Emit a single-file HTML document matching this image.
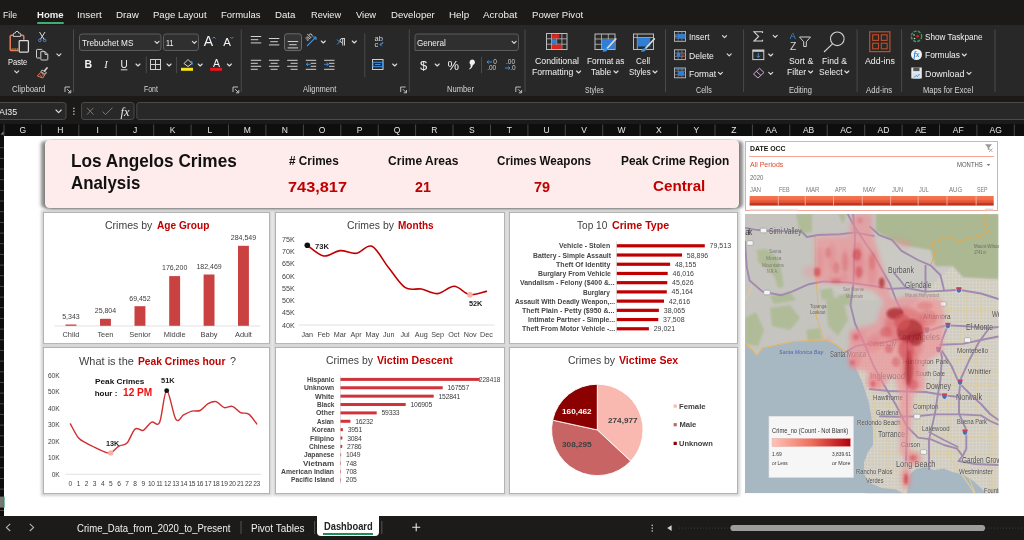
<!DOCTYPE html>
<html><head><meta charset="utf-8"><title>Los Angelos Crimes Analysis - Dashboard</title>
<style>
html,body{margin:0;padding:0;}
body{width:1024px;height:540px;overflow:hidden;position:relative;background:#fff;font-family:'Liberation Sans',sans-serif;}
.t{position:absolute;white-space:pre;line-height:1;}
#root{position:absolute;left:0;top:0;width:1024px;height:540px;overflow:hidden;will-change:transform;}
svg{overflow:visible}
</style></head><body><div id="root">
<div style="position:absolute;left:0;top:0;width:1024px;height:25px;background:#1b1a19"></div>
<div style="position:absolute;left:0;top:25px;width:1024px;height:71px;background:#282828"></div>
<div style="position:absolute;left:0;top:96px;width:1024px;height:28px;background:#1b1a19"></div>
<div style="position:absolute;left:0;top:124px;width:1024px;height:12px;background:#0e0e0e"></div>
<span class="t" style="left:2.90px;top:10px;font-size:9.9px;color:#f0f0f0;transform:scaleX(0.884);transform-origin:0 0;">File</span>
<span class="t" style="left:36.60px;top:10px;font-size:9.9px;color:#f0f0f0;font-weight:700;transform:scaleX(0.967);transform-origin:0 0;">Home</span>
<span class="t" style="left:77.00px;top:10px;font-size:9.9px;color:#f0f0f0;">Insert</span>
<span class="t" style="left:116.00px;top:10px;font-size:9.9px;color:#f0f0f0;transform:scaleX(0.990);transform-origin:0 0;">Draw</span>
<span class="t" style="left:152.90px;top:10px;font-size:9.9px;color:#f0f0f0;transform:scaleX(0.966);transform-origin:0 0;">Page Layout</span>
<span class="t" style="left:221.20px;top:10px;font-size:9.9px;color:#f0f0f0;transform:scaleX(0.960);transform-origin:0 0;">Formulas</span>
<span class="t" style="left:274.50px;top:10px;font-size:9.9px;color:#f0f0f0;transform:scaleX(0.980);transform-origin:0 0;">Data</span>
<span class="t" style="left:310.50px;top:10px;font-size:9.9px;color:#f0f0f0;transform:scaleX(0.929);transform-origin:0 0;">Review</span>
<span class="t" style="left:355.60px;top:10px;font-size:9.9px;color:#f0f0f0;transform:scaleX(0.948);transform-origin:0 0;">View</span>
<span class="t" style="left:390.50px;top:10px;font-size:9.9px;color:#f0f0f0;transform:scaleX(0.973);transform-origin:0 0;">Developer</span>
<span class="t" style="left:449.10px;top:10px;font-size:9.9px;color:#f0f0f0;transform:scaleX(0.992);transform-origin:0 0;">Help</span>
<span class="t" style="left:482.80px;top:10px;font-size:9.9px;color:#f0f0f0;transform:scaleX(1.005);transform-origin:0 0;">Acrobat</span>
<span class="t" style="left:531.70px;top:10px;font-size:9.9px;color:#f0f0f0;transform:scaleX(0.971);transform-origin:0 0;">Power Pivot</span>
<div style="position:absolute;left:36.5px;top:22.2px;width:27.8px;height:1.5px;background:#3fae72;border-radius:1px"></div>
<svg style="position:absolute;left:0;top:0" width="1024" height="136" viewBox="0 0 1024 136"><rect x="73.0" y="29.5" width="1" height="62.5" fill="#4a4a4a"/><rect x="240.7" y="29.5" width="1" height="62.5" fill="#4a4a4a"/><rect x="408.8" y="29.5" width="1" height="62.5" fill="#4a4a4a"/><rect x="524.5" y="29.5" width="1" height="62.5" fill="#4a4a4a"/><rect x="665.0" y="29.5" width="1" height="62.5" fill="#4a4a4a"/><rect x="743.1" y="29.5" width="1" height="62.5" fill="#4a4a4a"/><rect x="856.6" y="29.5" width="1" height="62.5" fill="#4a4a4a"/><rect x="901.1" y="29.5" width="1" height="62.5" fill="#4a4a4a"/><rect x="994.5" y="29.5" width="1" height="62.5" fill="#4a4a4a"/><rect x="145.8" y="56.5" width="1" height="16.700000000000003" fill="#4a4a4a"/><rect x="176.1" y="56.9" width="1" height="16.300000000000004" fill="#4a4a4a"/><rect x="364.3" y="33.3" width="1" height="44.0" fill="#4a4a4a"/><rect x="481.0" y="56.9" width="1" height="16.300000000000004" fill="#4a4a4a"/><path d="M13.4 35.2 H11.4 a1.2 1.2 0 0 0 -1.2 1.2 V49.4 a1.2 1.2 0 0 0 1.2 1.2 H18.4 M20.6 35.2 H22.6 a1.2 1.2 0 0 1 1.2 1.2 V39.8" fill="none" stroke="#ea7d57" stroke-width="1.5"/><path d="M13.3 36.4 V34.2 q0 -1 1 -1 h0.9 q0.3 -1.9 1.8 -1.9 q1.5 0 1.8 1.9 h0.9 q1 0 1 1 V36.4 Z" fill="#282828" stroke="#cfcfcf" stroke-width="1"/><path d="M11.6 49 H18.2" stroke="#f0c419" stroke-width="1.1" stroke-dasharray="1.1 0.7"/><rect x="19.2" y="40.6" width="9.2" height="11.4" rx="0.8" fill="#282828" stroke="#dadada" stroke-width="1.25"/><path d="M14.7 70.9 L16.7 72.9 L18.7 70.9" fill="none" stroke="#dcdcdc" stroke-width="1.15" stroke-linecap="round" stroke-linejoin="round"/><path d="M39.5 32 L44.2 39.5 M45 32 L40.3 39.5" stroke="#d8d8d8" stroke-width="1" fill="none"/><circle cx="39.8" cy="40.3" r="1.3" fill="none" stroke="#3d8fe0" stroke-width="1"/><circle cx="44.7" cy="40.3" r="1.3" fill="none" stroke="#3d8fe0" stroke-width="1"/><path d="M40 58 H37.3 a0.8 0.8 0 0 1 -0.8 -0.8 V50.2 a0.8 0.8 0 0 1 0.8 -0.8 H41.8 L43 50.6" fill="none" stroke="#d0d0d0" stroke-width="1"/><path d="M40.8 51.6 H45 L47.8 54.4 V59.4 a0.6 0.6 0 0 1 -0.6 0.6 H41.4 a0.6 0.6 0 0 1 -0.6 -0.6 Z M45 51.6 V54.4 H47.8" fill="#282828" stroke="#d0d0d0" stroke-width="1" stroke-linejoin="round"/><path d="M56.9 53.8 L58.9 55.8 L60.9 53.8" fill="none" stroke="#dcdcdc" stroke-width="1.15" stroke-linecap="round" stroke-linejoin="round"/><path d="M47 68 L44.6 70.8" stroke="#d0d0d0" stroke-width="1.7" stroke-linecap="round"/><path d="M42 70 L46.4 72.5 L45.3 74.3 L40.9 71.8 Z" fill="#282828" stroke="#d0d0d0" stroke-width="0.9"/><path d="M40.6 72.4 L44.8 74.8 L42.8 78 L37.4 76 Z" fill="none" stroke="#ea7d57" stroke-width="1"/><path d="M40.2 74.6 L41.8 77.4 M42.3 74.4 L43.4 76.4" stroke="#ea7d57" stroke-width="0.7"/><path d="M65 92 V87 H70" fill="none" stroke="#bdbdbd" stroke-width="1"/><path d="M67.2 89.2 L70.6 92.6 M70.8 90 V92.8 H68" fill="none" stroke="#bdbdbd" stroke-width="1"/><rect x="79.5" y="34" width="81.5" height="16.5" rx="2.5" fill="#2f2f2f" stroke="#5c5c5c" stroke-width="1"/><path d="M155.0 41.3 L157.0 43.3 L159.0 41.3" fill="none" stroke="#dcdcdc" stroke-width="1.15" stroke-linecap="round" stroke-linejoin="round"/><rect x="163.5" y="34" width="35" height="16.5" rx="2.5" fill="#2f2f2f" stroke="#5c5c5c" stroke-width="1"/><path d="M192.4 41.3 L194.4 43.3 L196.4 41.3" fill="none" stroke="#dcdcdc" stroke-width="1.15" stroke-linecap="round" stroke-linejoin="round"/><path d="M136.0 64.0 L138.0 66.0 L140.0 64.0" fill="none" stroke="#dcdcdc" stroke-width="1.15" stroke-linecap="round" stroke-linejoin="round"/><rect x="120.8" y="69.3" width="6.6" height="1" fill="#d8d8d8"/><rect x="150.5" y="59.5" width="10" height="10" fill="none" stroke="#cfcfcf" stroke-width="1"/><path d="M155.5 59.5 V69.5 M150.5 64.5 H160.5" stroke="#cfcfcf" stroke-width="1"/><path d="M167.1 64.0 L169.1 66.0 L171.1 64.0" fill="none" stroke="#dcdcdc" stroke-width="1.15" stroke-linecap="round" stroke-linejoin="round"/><path d="M184 63.5 L188 59.5 L192 63.5 L188 66.5 Z" fill="none" stroke="#d8d8d8" stroke-width="1"/><path d="M191.5 61 L192.5 64.5" stroke="#3d8fe0" stroke-width="1.2"/><rect x="181" y="67.8" width="12" height="3" fill="#f5e41a"/><path d="M198.2 64.0 L200.2 66.0 L202.2 64.0" fill="none" stroke="#dcdcdc" stroke-width="1.15" stroke-linecap="round" stroke-linejoin="round"/><rect x="210.1" y="67.8" width="12" height="3" fill="#e8161d"/><path d="M227.4 64.0 L229.4 66.0 L231.4 64.0" fill="none" stroke="#dcdcdc" stroke-width="1.15" stroke-linecap="round" stroke-linejoin="round"/><path d="M212.5 38.5 L214 37 L215.5 38.5" fill="none" stroke="#3d8fe0" stroke-width="1"/><path d="M230.3 37 L231.8 38.5 L233.3 37" fill="none" stroke="#3d8fe0" stroke-width="1"/><path d="M233 92 V87 H238" fill="none" stroke="#bdbdbd" stroke-width="1"/><path d="M235.2 89.2 L238.6 92.6 M238.8 90 V92.8 H236" fill="none" stroke="#bdbdbd" stroke-width="1"/><rect x="250.8" y="36.0" width="10.4" height="1" fill="#d0d0d0"/><rect x="250.8" y="39.2" width="7.5" height="1" fill="#d0d0d0"/><rect x="250.8" y="42.4" width="10.4" height="1" fill="#d0d0d0"/><rect x="268.9" y="38.0" width="10.4" height="1" fill="#d0d0d0"/><rect x="270.3" y="41.2" width="7.5" height="1" fill="#d0d0d0"/><rect x="268.9" y="44.4" width="10.4" height="1" fill="#d0d0d0"/><rect x="284.5" y="33.8" width="17" height="16.8" rx="2.5" fill="#343434" stroke="#6a6a6a" stroke-width="1"/><rect x="287.7" y="41.0" width="10.4" height="1" fill="#d0d0d0"/><rect x="289.1" y="44.2" width="7.5" height="1" fill="#d0d0d0"/><rect x="287.7" y="47.4" width="10.4" height="1" fill="#d0d0d0"/><path d="M307 46 L316 37 M316 37 h-3 M316 37 v3" stroke="#3d8fe0" stroke-width="1.1" fill="none"/><path d="M321.3 41.0 L323.3 43.0 L325.3 41.0" fill="none" stroke="#dcdcdc" stroke-width="1.15" stroke-linecap="round" stroke-linejoin="round"/><path d="M337 39.5 L339.5 42 L337 44.5" stroke="#3d8fe0" stroke-width="1" fill="none"/><path d="M344.5 38.5 V45.5 M342.7 38.5 V45.5 M345 38.5 H342 a2 2 0 0 0 0 4" stroke="#d0d0d0" stroke-width="1" fill="none"/><path d="M352.3 41.0 L354.3 43.0 L356.3 41.0" fill="none" stroke="#dcdcdc" stroke-width="1.15" stroke-linecap="round" stroke-linejoin="round"/><rect x="250.8" y="59.8" width="10.4" height="1" fill="#d0d0d0"/><rect x="250.8" y="62.8" width="7.0" height="1" fill="#d0d0d0"/><rect x="250.8" y="65.8" width="10.4" height="1" fill="#d0d0d0"/><rect x="250.8" y="68.8" width="7.0" height="1" fill="#d0d0d0"/><rect x="268.9" y="59.8" width="10.4" height="1" fill="#d0d0d0"/><rect x="270.6" y="62.8" width="7.0" height="1" fill="#d0d0d0"/><rect x="268.9" y="65.8" width="10.4" height="1" fill="#d0d0d0"/><rect x="270.6" y="68.8" width="7.0" height="1" fill="#d0d0d0"/><rect x="287.2" y="59.8" width="10.4" height="1" fill="#d0d0d0"/><rect x="290.6" y="62.8" width="7.0" height="1" fill="#d0d0d0"/><rect x="287.2" y="65.8" width="10.4" height="1" fill="#d0d0d0"/><rect x="290.6" y="68.8" width="7.0" height="1" fill="#d0d0d0"/><rect x="305.8" y="59.8" width="10.4" height="1" fill="#d0d0d0"/><rect x="310.7" y="62.8" width="5.5" height="1" fill="#d0d0d0"/><rect x="310.7" y="65.8" width="5.5" height="1" fill="#d0d0d0"/><rect x="305.8" y="68.8" width="10.4" height="1" fill="#d0d0d0"/><path d="M310.5 64.3 H306.2 m1.8 -1.8 l-1.8 1.8 l1.8 1.8" stroke="#3d8fe0" stroke-width="1" fill="none"/><rect x="324.1" y="59.8" width="10.4" height="1" fill="#d0d0d0"/><rect x="329.0" y="62.8" width="5.5" height="1" fill="#d0d0d0"/><rect x="329.0" y="65.8" width="5.5" height="1" fill="#d0d0d0"/><rect x="324.1" y="68.8" width="10.4" height="1" fill="#d0d0d0"/><path d="M324.2 64.3 H328.5 m-1.8 -1.8 l1.8 1.8 l-1.8 1.8" stroke="#3d8fe0" stroke-width="1" fill="none"/><path d="M380 44.5 q3 0 3 -2.5 M380 44.5 l1.8 -1.8 M380 44.5 l1.8 1.8" stroke="#3d8fe0" stroke-width="1" fill="none"/><rect x="372.5" y="59.5" width="10.5" height="10" fill="none" stroke="#cfcfcf" stroke-width="1"/><rect x="373" y="62.3" width="9.5" height="4.4" fill="none" stroke="#3d8fe0" stroke-width="1"/><path d="M375 64.5 H380.5" stroke="#3d8fe0" stroke-width="1"/><path d="M392.7 64.0 L394.7 66.0 L396.7 64.0" fill="none" stroke="#dcdcdc" stroke-width="1.15" stroke-linecap="round" stroke-linejoin="round"/><path d="M400.7 92 V87 H405.7" fill="none" stroke="#bdbdbd" stroke-width="1"/><path d="M402.9 89.2 L406.3 92.6 M406.5 90 V92.8 H403.7" fill="none" stroke="#bdbdbd" stroke-width="1"/><path d="M415 50.5 V36.5 a2.5 2.5 0 0 1 2.5 -2.5 H516 a2.5 2.5 0 0 1 2.5 2.5 V48 a2.5 2.5 0 0 1 -2.5 2.5 Z" fill="#2f2f2f" stroke="#5c5c5c" stroke-width="1"/><path d="M512.1 41.3 L514.1 43.3 L516.1 41.3" fill="none" stroke="#dcdcdc" stroke-width="1.15" stroke-linecap="round" stroke-linejoin="round"/><path d="M435.2 64.0 L437.2 66.0 L439.2 64.0" fill="none" stroke="#dcdcdc" stroke-width="1.15" stroke-linecap="round" stroke-linejoin="round"/><path d="M492 62 H487 m1.6 -1.6 l-1.6 1.6 l1.6 1.6" stroke="#3d8fe0" stroke-width="1" fill="none"/><path d="M505 68 H510 m-1.6 -1.6 l1.6 1.6 l-1.6 1.6" stroke="#3d8fe0" stroke-width="1" fill="none"/><path d="M472.2 59.6 a2.7 2.7 0 1 1 -1.2 5.1 q1.8 -0.2 1.6 -1.6 q1.2 3.8 -2.9 6.3 l-0.5 -0.7 q2.3 -2 1.3 -4.3 a2.7 2.7 0 0 1 1.7 -4.8 Z" fill="#f0f0f0"/><path d="M515.8 92 V87 H520.8" fill="none" stroke="#bdbdbd" stroke-width="1"/><path d="M518.0 89.2 L521.4 92.6 M521.5999999999999 90 V92.8 H518.8" fill="none" stroke="#bdbdbd" stroke-width="1"/><rect x="546.5" y="33.5" width="20.5" height="16" fill="#2b2b2b" stroke="#bdbdbd" stroke-width="1"/><path d="M546.5 38.8 H567 M546.5 44.2 H567 M551.5 33.5 V49.5 M556.7 33.5 V49.5 M561.9 33.5 V49.5" stroke="#bdbdbd" stroke-width="0.8"/><rect x="551.9" y="34.3" width="7.5" height="4" fill="#e2231a"/><rect x="551.9" y="39.3" width="4.5" height="4.4" fill="#2f7fd6"/><rect x="551.9" y="44.7" width="9.5" height="4.2" fill="#e2231a"/><path d="M576.6 71.0 L578.6 73.0 L580.6 71.0" fill="none" stroke="#dcdcdc" stroke-width="1.15" stroke-linecap="round" stroke-linejoin="round"/><rect x="595" y="34" width="20" height="15.5" fill="#2b2b2b" stroke="#bdbdbd" stroke-width="1"/><path d="M595 39 H615 M595 44.3 H615 M601.5 34 V49.5 M608.3 34 V49.5" stroke="#bdbdbd" stroke-width="0.8"/><rect x="601.9" y="39.4" width="12.7" height="9.7" fill="#2f7fd6"/><path d="M615.8 39 L607 48.5" stroke="#d8d8d8" stroke-width="1.8" stroke-linecap="round"/><path d="M606.8 48 q-2.8 0.2 -4.3 3.6 q4 0.6 5.6 -2.4 Z" fill="#3d8fe0"/><path d="M614.0 71.0 L616.0 73.0 L618.0 71.0" fill="none" stroke="#dcdcdc" stroke-width="1.15" stroke-linecap="round" stroke-linejoin="round"/><rect x="633.5" y="34" width="20" height="15.5" fill="#2b2b2b" stroke="#bdbdbd" stroke-width="1"/><path d="M633.5 37.5 H653.5 M637.3 34 V49.5" stroke="#bdbdbd" stroke-width="0.8"/><rect x="637.8" y="38" width="12.5" height="8.5" fill="#2f7fd6"/><path d="M654.3 39 L645.5 48.5" stroke="#d8d8d8" stroke-width="1.8" stroke-linecap="round"/><path d="M645.3 48 q-2.8 0.2 -4.3 3.6 q4 0.6 5.6 -2.4 Z" fill="#3d8fe0"/><path d="M653.0 71.0 L655.0 73.0 L657.0 71.0" fill="none" stroke="#dcdcdc" stroke-width="1.15" stroke-linecap="round" stroke-linejoin="round"/><rect x="674.5" y="31.5" width="11" height="9.8" fill="none" stroke="#bdbdbd" stroke-width="0.9"/><path d="M674.5 34.7 H685.5 M674.5 38.1 H685.5 M678.2 31.5 V41.3 M681.9 31.5 V41.3" stroke="#9a9a9a" stroke-width="0.6"/><rect x="674.5" y="49.8" width="11" height="9.8" fill="none" stroke="#bdbdbd" stroke-width="0.9"/><path d="M674.5 53.0 H685.5 M674.5 56.4 H685.5 M678.2 49.8 V59.599999999999994 M681.9 49.8 V59.599999999999994" stroke="#9a9a9a" stroke-width="0.6"/><rect x="674.5" y="68" width="11" height="9.8" fill="none" stroke="#bdbdbd" stroke-width="0.9"/><path d="M674.5 71.2 H685.5 M674.5 74.6 H685.5 M678.2 68 V77.8 M681.9 68 V77.8" stroke="#9a9a9a" stroke-width="0.6"/><rect x="678" y="33.9" width="7.5" height="4.6" fill="#2f7fd6"/><path d="M679.5 36.2 H675 m1.6 -1.4 l-1.6 1.4 l1.6 1.4" stroke="#3d8fe0" stroke-width="1" fill="none"/><circle cx="678.5" cy="54.7" r="2.1" fill="#2f7fd6"/><path d="M681.5 52.7 l3.6 4 M685.1 52.7 l-3.6 4" stroke="#e2231a" stroke-width="1"/><rect x="678.2" y="71.2" width="6" height="4.6" fill="#2f7fd6"/><path d="M675.5 69 H684.5" stroke="#3d8fe0" stroke-width="1"/><path d="M722.5 35.6 L724.5 37.6 L726.5 35.6" fill="none" stroke="#dcdcdc" stroke-width="1.15" stroke-linecap="round" stroke-linejoin="round"/><path d="M727.2 53.9 L729.2 55.9 L731.2 53.9" fill="none" stroke="#dcdcdc" stroke-width="1.15" stroke-linecap="round" stroke-linejoin="round"/><path d="M718.4 72.3 L720.4 74.3 L722.4 72.3" fill="none" stroke="#dcdcdc" stroke-width="1.15" stroke-linecap="round" stroke-linejoin="round"/><path d="M762.5 33 V31.8 H754 L758.6 36.4 L754 41 H762.5 V39.8" fill="none" stroke="#d8d8d8" stroke-width="1.1"/><path d="M773.2 35.4 L775.2 37.4 L777.2 35.4" fill="none" stroke="#dcdcdc" stroke-width="1.15" stroke-linecap="round" stroke-linejoin="round"/><rect x="752.8" y="50" width="11" height="9.6" fill="none" stroke="#cfcfcf" stroke-width="1"/><rect x="752.8" y="50" width="11" height="1.8" fill="#cfcfcf"/><path d="M758.3 53 V57.5 m-1.8 -1.8 l1.8 1.8 l1.8 -1.8" stroke="#3d8fe0" stroke-width="1" fill="none"/><path d="M768.7 54.0 L770.7 56.0 L772.7 54.0" fill="none" stroke="#dcdcdc" stroke-width="1.15" stroke-linecap="round" stroke-linejoin="round"/><path d="M753.5 74 L759.5 68.3 L764 72.5 L758 78 Z" fill="none" stroke="#d7a3d7" stroke-width="1"/><path d="M756.3 71.3 L761 75.5" stroke="#d7a3d7" stroke-width="1"/><path d="M768.7 72.3 L770.7 74.3 L772.7 72.3" fill="none" stroke="#dcdcdc" stroke-width="1.15" stroke-linecap="round" stroke-linejoin="round"/><path d="M799.5 37 H810.5 L806.3 41.8 V46.5 H803.7 V41.8 Z" fill="none" stroke="#d0d0d0" stroke-width="1"/><path d="M808.6 71.0 L810.6 73.0 L812.6 71.0" fill="none" stroke="#dcdcdc" stroke-width="1.15" stroke-linecap="round" stroke-linejoin="round"/><circle cx="837.3" cy="38.8" r="6.8" fill="none" stroke="#d0d0d0" stroke-width="1.1"/><path d="M832.5 43.8 L824 52" stroke="#d0d0d0" stroke-width="1.1"/><path d="M844.8 71.0 L846.8 73.0 L848.8 71.0" fill="none" stroke="#dcdcdc" stroke-width="1.15" stroke-linecap="round" stroke-linejoin="round"/><rect x="869.7" y="31.8" width="20.2" height="19.8" fill="none" stroke="#bd4f2b" stroke-width="1.2"/><rect x="872.7" y="34.8" width="5.8" height="5.6" fill="none" stroke="#bd4f2b" stroke-width="1.1"/><rect x="881.3" y="34.8" width="5.8" height="5.6" fill="none" stroke="#bd4f2b" stroke-width="1.1"/><rect x="872.7" y="43.2" width="5.8" height="5.6" fill="none" stroke="#bd4f2b" stroke-width="1.1"/><rect x="881.3" y="43.2" width="5.8" height="5.6" fill="none" stroke="#bd4f2b" stroke-width="1.1"/><circle cx="916.5" cy="36.3" r="5.2" fill="#2a2a2a" stroke="#3c9a63" stroke-width="1.4" stroke-dasharray="3 1.2"/><circle cx="917.6" cy="36.3" r="1.2" fill="#e2231a"/><circle cx="914" cy="35" r="0.8" fill="#d0d0d0"/><circle cx="914.5" cy="38.5" r="0.8" fill="#d0d0d0"/><circle cx="916.5" cy="54.5" r="5.5" fill="#f2f2f2"/><rect x="911.3" y="67.5" width="10.5" height="11" fill="#e8e8e8"/><rect x="913.3" y="67.5" width="6.2" height="3.6" fill="#555"/><rect x="913" y="73.2" width="7" height="5.3" fill="#cfe3f2"/><path d="M914 77.5 l2 -2 l1.5 1 l2 -2.5" stroke="#3d8fe0" stroke-width="0.9" fill="none"/><path d="M962.3 54.0 L964.3 56.0 L966.3 54.0" fill="none" stroke="#dcdcdc" stroke-width="1.15" stroke-linecap="round" stroke-linejoin="round"/><path d="M967.0 72.4 L969.0 74.4 L971.0 72.4" fill="none" stroke="#dcdcdc" stroke-width="1.15" stroke-linecap="round" stroke-linejoin="round"/></svg>
<span class="t" style="left:7.80px;top:57px;font-size:9.6px;color:#f2f2f2;transform:scaleX(0.782);transform-origin:0 0;">Paste</span>
<span class="t" style="left:12.00px;top:85px;font-size:9.0px;color:#d6d6d6;transform:scaleX(0.867);transform-origin:0 0;">Clipboard</span>
<span class="t" style="left:81.80px;top:38px;font-size:9.6px;color:#f2f2f2;transform:scaleX(0.859);transform-origin:0 0;">Trebuchet MS</span>
<span class="t" style="left:165.60px;top:38px;font-size:9.6px;color:#f2f2f2;transform:scaleX(0.743);transform-origin:0 0;">11</span>
<span class="t" style="left:84.61px;top:59px;font-size:10.5px;color:#f2f2f2;font-weight:700;">B</span>
<span class="t" style="left:104.25px;top:60px;font-size:10.5px;color:#f2f2f2;font-style:italic;font-family:'Liberation Serif',serif;">I</span>
<span class="t" style="left:120.49px;top:60px;font-size:10.0px;color:#f2f2f2;">U</span>
<span class="t" style="left:203.63px;top:34px;font-size:14.0px;color:#f2f2f2;">A</span>
<span class="t" style="left:223.16px;top:37px;font-size:11.5px;color:#f2f2f2;">A</span>
<span class="t" style="left:212.90px;top:58px;font-size:10.5px;color:#f2f2f2;">A</span>
<span class="t" style="left:144.00px;top:85px;font-size:9.0px;color:#d6d6d6;transform:scaleX(0.766);transform-origin:0 0;">Font</span>
<span class="t" style="left:306.00px;top:36px;font-size:7.5px;color:#d0d0d0;transform:rotate(-45deg);transform-origin:left center;">ab</span>
<span class="t" style="left:374.60px;top:35px;font-size:7.5px;color:#d8d8d8;">ab</span>
<span class="t" style="left:374.60px;top:41px;font-size:7.5px;color:#d8d8d8;">c</span>
<span class="t" style="left:302.50px;top:85px;font-size:9.0px;color:#d6d6d6;transform:scaleX(0.830);transform-origin:0 0;">Alignment</span>
<span class="t" style="left:417.30px;top:38px;font-size:9.6px;color:#f2f2f2;transform:scaleX(0.846);transform-origin:0 0;">General</span>
<span class="t" style="left:419.88px;top:59px;font-size:13.0px;color:#f2f2f2;">$</span>
<span class="t" style="left:447.42px;top:59px;font-size:13.0px;color:#f2f2f2;">%</span>
<span class="t" style="left:493.20px;top:59px;font-size:6.5px;color:#d0d0d0;">0</span>
<span class="t" style="left:487.20px;top:65px;font-size:6.5px;color:#d0d0d0;">.00</span>
<span class="t" style="left:506.00px;top:59px;font-size:6.5px;color:#d0d0d0;">.00</span>
<span class="t" style="left:510.30px;top:65px;font-size:6.5px;color:#d0d0d0;">.0</span>
<span class="t" style="left:447.00px;top:85px;font-size:9.0px;color:#d6d6d6;transform:scaleX(0.843);transform-origin:0 0;">Number</span>
<span class="t" style="left:534.70px;top:56px;font-size:9.6px;color:#f2f2f2;transform:scaleX(0.916);transform-origin:0 0;">Conditional</span>
<span class="t" style="left:531.90px;top:67px;font-size:9.6px;color:#f2f2f2;transform:scaleX(0.902);transform-origin:0 0;">Formatting</span>
<span class="t" style="left:586.60px;top:56px;font-size:9.6px;color:#f2f2f2;transform:scaleX(0.866);transform-origin:0 0;">Format as</span>
<span class="t" style="left:591.30px;top:67px;font-size:9.6px;color:#f2f2f2;transform:scaleX(0.884);transform-origin:0 0;">Table</span>
<span class="t" style="left:636.00px;top:56px;font-size:9.6px;color:#f2f2f2;transform:scaleX(0.852);transform-origin:0 0;">Cell</span>
<span class="t" style="left:628.70px;top:67px;font-size:9.6px;color:#f2f2f2;transform:scaleX(0.830);transform-origin:0 0;">Styles</span>
<span class="t" style="left:584.80px;top:86px;font-size:9.0px;color:#d6d6d6;transform:scaleX(0.759);transform-origin:0 0;">Styles</span>
<span class="t" style="left:688.80px;top:32px;font-size:9.6px;color:#f2f2f2;transform:scaleX(0.850);transform-origin:0 0;">Insert</span>
<span class="t" style="left:688.80px;top:51px;font-size:9.6px;color:#f2f2f2;transform:scaleX(0.897);transform-origin:0 0;">Delete</span>
<span class="t" style="left:688.80px;top:69px;font-size:9.6px;color:#f2f2f2;transform:scaleX(0.891);transform-origin:0 0;">Format</span>
<span class="t" style="left:696.30px;top:86px;font-size:9.0px;color:#d6d6d6;transform:scaleX(0.790);transform-origin:0 0;">Cells</span>
<span class="t" style="left:789.80px;top:32px;font-size:9.0px;color:#3d8fe0;">A</span>
<span class="t" style="left:790.00px;top:41px;font-size:10.5px;color:#d8d8d8;">Z</span>
<span class="t" style="left:788.50px;top:56px;font-size:9.6px;color:#f2f2f2;transform:scaleX(0.907);transform-origin:0 0;">Sort &amp;</span>
<span class="t" style="left:787.30px;top:67px;font-size:9.6px;color:#f2f2f2;transform:scaleX(0.900);transform-origin:0 0;">Filter</span>
<span class="t" style="left:821.90px;top:56px;font-size:9.6px;color:#f2f2f2;transform:scaleX(0.897);transform-origin:0 0;">Find &amp;</span>
<span class="t" style="left:818.90px;top:67px;font-size:9.6px;color:#f2f2f2;transform:scaleX(0.888);transform-origin:0 0;">Select</span>
<span class="t" style="left:788.50px;top:86px;font-size:9.0px;color:#d6d6d6;transform:scaleX(0.832);transform-origin:0 0;">Editing</span>
<span class="t" style="left:864.90px;top:56px;font-size:9.6px;color:#f2f2f2;transform:scaleX(0.918);transform-origin:0 0;">Add-ins</span>
<span class="t" style="left:865.90px;top:86px;font-size:9.0px;color:#d6d6d6;transform:scaleX(0.855);transform-origin:0 0;">Add-ins</span>
<span class="t" style="left:924.90px;top:32px;font-size:9.6px;color:#f2f2f2;transform:scaleX(0.852);transform-origin:0 0;">Show Taskpane</span>
<span class="t" style="left:924.90px;top:50px;font-size:9.6px;color:#f2f2f2;transform:scaleX(0.875);transform-origin:0 0;">Formulas</span>
<span class="t" style="left:924.90px;top:69px;font-size:9.6px;color:#f2f2f2;transform:scaleX(0.923);transform-origin:0 0;">Download</span>
<span class="t" style="left:922.80px;top:86px;font-size:9.0px;color:#d6d6d6;transform:scaleX(0.842);transform-origin:0 0;">Maps for Excel</span>
<span class="t" style="left:913.38px;top:51px;font-size:7.5px;color:#2f7fd6;font-weight:700;font-style:italic;font-family:'Liberation Serif',serif;">fx</span>
<svg style="position:absolute;left:0;top:0" width="1024" height="136" viewBox="0 0 1024 136"><path d="M-3 102.5 H63.5 a2.5 2.5 0 0 1 2.5 2.5 V117 a2.5 2.5 0 0 1 -2.5 2.5 H-3 Z" fill="#282828" stroke="#4a4a4a" stroke-width="1"/><path d="M56.0 110.0 L58.6 112.6 L61.2 110.0" fill="none" stroke="#dcdcdc" stroke-width="1.15" stroke-linecap="round" stroke-linejoin="round"/><rect x="73.2" y="107.7" width="1.3" height="1.3" fill="#cfcfcf"/><rect x="73.2" y="110.60000000000001" width="1.3" height="1.3" fill="#cfcfcf"/><rect x="73.2" y="113.5" width="1.3" height="1.3" fill="#cfcfcf"/><rect x="81.5" y="102.5" width="52.5" height="17" rx="2.5" fill="#282828" stroke="#4a4a4a" stroke-width="1"/><path d="M87 107.8 L93.5 114.6 M93.5 107.8 L87 114.6" stroke="#7a7a7a" stroke-width="1" fill="none"/><path d="M102.5 111.5 L105.5 114.6 L112.5 107.6" stroke="#7a7a7a" stroke-width="1" fill="none"/><path d="M1030 102.5 H139.3 a2.5 2.5 0 0 0 -2.5 2.5 V117 a2.5 2.5 0 0 0 2.5 2.5 H1030" fill="#282828" stroke="#4a4a4a" stroke-width="1"/><rect x="3.5" y="124.5" width="1" height="11.5" fill="#474747"/><rect x="40.9" y="124.5" width="1" height="11.5" fill="#474747"/><rect x="78.3" y="124.5" width="1" height="11.5" fill="#474747"/><rect x="115.8" y="124.5" width="1" height="11.5" fill="#474747"/><rect x="153.2" y="124.5" width="1" height="11.5" fill="#474747"/><rect x="190.6" y="124.5" width="1" height="11.5" fill="#474747"/><rect x="228.0" y="124.5" width="1" height="11.5" fill="#474747"/><rect x="265.4" y="124.5" width="1" height="11.5" fill="#474747"/><rect x="302.9" y="124.5" width="1" height="11.5" fill="#474747"/><rect x="340.3" y="124.5" width="1" height="11.5" fill="#474747"/><rect x="377.7" y="124.5" width="1" height="11.5" fill="#474747"/><rect x="415.1" y="124.5" width="1" height="11.5" fill="#474747"/><rect x="452.5" y="124.5" width="1" height="11.5" fill="#474747"/><rect x="490.0" y="124.5" width="1" height="11.5" fill="#474747"/><rect x="527.4" y="124.5" width="1" height="11.5" fill="#474747"/><rect x="564.8" y="124.5" width="1" height="11.5" fill="#474747"/><rect x="602.2" y="124.5" width="1" height="11.5" fill="#474747"/><rect x="639.6" y="124.5" width="1" height="11.5" fill="#474747"/><rect x="677.1" y="124.5" width="1" height="11.5" fill="#474747"/><rect x="714.5" y="124.5" width="1" height="11.5" fill="#474747"/><rect x="751.9" y="124.5" width="1" height="11.5" fill="#474747"/><rect x="789.3" y="124.5" width="1" height="11.5" fill="#474747"/><rect x="826.7" y="124.5" width="1" height="11.5" fill="#474747"/><rect x="864.2" y="124.5" width="1" height="11.5" fill="#474747"/><rect x="901.6" y="124.5" width="1" height="11.5" fill="#474747"/><rect x="939.0" y="124.5" width="1" height="11.5" fill="#474747"/><rect x="976.4" y="124.5" width="1" height="11.5" fill="#474747"/><rect x="1013.8" y="124.5" width="1" height="11.5" fill="#474747"/><path d="M0.5 134.5 L3.5 131.5 V134.5 Z" fill="#8a8a8a"/></svg>
<span class="t" style="left:-1.50px;top:107px;font-size:9.6px;color:#f0f0f0;transform:scaleX(0.922);transform-origin:0 0;">AI35</span>
<span class="t" style="left:120.49px;top:106px;font-size:12.5px;color:#e6e6e6;font-style:italic;font-family:'Liberation Serif',serif;">fx</span>
<span class="t" style="left:19.49px;top:126px;font-size:8.5px;color:#e6e6e6;">G</span>
<span class="t" style="left:57.15px;top:126px;font-size:8.5px;color:#e6e6e6;">H</span>
<span class="t" style="left:96.46px;top:126px;font-size:8.5px;color:#e6e6e6;">I</span>
<span class="t" style="left:132.94px;top:126px;font-size:8.5px;color:#e6e6e6;">J</span>
<span class="t" style="left:169.65px;top:126px;font-size:8.5px;color:#e6e6e6;">K</span>
<span class="t" style="left:207.54px;top:126px;font-size:8.5px;color:#e6e6e6;">L</span>
<span class="t" style="left:243.78px;top:126px;font-size:8.5px;color:#e6e6e6;">M</span>
<span class="t" style="left:281.67px;top:126px;font-size:8.5px;color:#e6e6e6;">N</span>
<span class="t" style="left:318.85px;top:126px;font-size:8.5px;color:#e6e6e6;">O</span>
<span class="t" style="left:356.75px;top:126px;font-size:8.5px;color:#e6e6e6;">P</span>
<span class="t" style="left:393.69px;top:126px;font-size:8.5px;color:#e6e6e6;">Q</span>
<span class="t" style="left:431.35px;top:126px;font-size:8.5px;color:#e6e6e6;">R</span>
<span class="t" style="left:469.01px;top:126px;font-size:8.5px;color:#e6e6e6;">S</span>
<span class="t" style="left:506.66px;top:126px;font-size:8.5px;color:#e6e6e6;">T</span>
<span class="t" style="left:543.61px;top:126px;font-size:8.5px;color:#e6e6e6;">U</span>
<span class="t" style="left:581.27px;top:126px;font-size:8.5px;color:#e6e6e6;">V</span>
<span class="t" style="left:617.51px;top:126px;font-size:8.5px;color:#e6e6e6;">W</span>
<span class="t" style="left:656.11px;top:126px;font-size:8.5px;color:#e6e6e6;">X</span>
<span class="t" style="left:693.53px;top:126px;font-size:8.5px;color:#e6e6e6;">Y</span>
<span class="t" style="left:731.18px;top:126px;font-size:8.5px;color:#e6e6e6;">Z</span>
<span class="t" style="left:765.53px;top:126px;font-size:8.5px;color:#e6e6e6;">AA</span>
<span class="t" style="left:802.95px;top:126px;font-size:8.5px;color:#e6e6e6;">AB</span>
<span class="t" style="left:840.14px;top:126px;font-size:8.5px;color:#e6e6e6;">AC</span>
<span class="t" style="left:877.56px;top:126px;font-size:8.5px;color:#e6e6e6;">AD</span>
<span class="t" style="left:915.21px;top:126px;font-size:8.5px;color:#e6e6e6;">AE</span>
<span class="t" style="left:952.87px;top:126px;font-size:8.5px;color:#e6e6e6;">AF</span>
<span class="t" style="left:989.58px;top:126px;font-size:8.5px;color:#e6e6e6;">AG</span>
<div style="position:absolute;left:0;top:136px;width:4px;height:380px;background:#0e0e0e"></div>
<svg style="position:absolute;left:0;top:0" width="6" height="516"><rect x="0" y="147.2" width="4" height="1" fill="#474747"/><rect x="0" y="157.9" width="4" height="1" fill="#474747"/><rect x="0" y="168.5" width="4" height="1" fill="#474747"/><rect x="0" y="179.2" width="4" height="1" fill="#474747"/><rect x="0" y="189.9" width="4" height="1" fill="#474747"/><rect x="0" y="200.5" width="4" height="1" fill="#474747"/><rect x="0" y="211.2" width="4" height="1" fill="#474747"/><rect x="0" y="221.9" width="4" height="1" fill="#474747"/><rect x="0" y="232.6" width="4" height="1" fill="#474747"/><rect x="0" y="243.2" width="4" height="1" fill="#474747"/><rect x="0" y="253.9" width="4" height="1" fill="#474747"/><rect x="0" y="264.6" width="4" height="1" fill="#474747"/><rect x="0" y="275.2" width="4" height="1" fill="#474747"/><rect x="0" y="285.9" width="4" height="1" fill="#474747"/><rect x="0" y="296.6" width="4" height="1" fill="#474747"/><rect x="0" y="307.2" width="4" height="1" fill="#474747"/><rect x="0" y="317.9" width="4" height="1" fill="#474747"/><rect x="0" y="328.6" width="4" height="1" fill="#474747"/><rect x="0" y="339.3" width="4" height="1" fill="#474747"/><rect x="0" y="349.9" width="4" height="1" fill="#474747"/><rect x="0" y="360.6" width="4" height="1" fill="#474747"/><rect x="0" y="371.3" width="4" height="1" fill="#474747"/><rect x="0" y="381.9" width="4" height="1" fill="#474747"/><rect x="0" y="392.6" width="4" height="1" fill="#474747"/><rect x="0" y="403.3" width="4" height="1" fill="#474747"/><rect x="0" y="413.9" width="4" height="1" fill="#474747"/><rect x="0" y="424.6" width="4" height="1" fill="#474747"/><rect x="0" y="435.3" width="4" height="1" fill="#474747"/><rect x="0" y="446.0" width="4" height="1" fill="#474747"/><rect x="0" y="456.6" width="4" height="1" fill="#474747"/><rect x="0" y="467.3" width="4" height="1" fill="#474747"/><rect x="0" y="478.0" width="4" height="1" fill="#474747"/><rect x="0" y="488.6" width="4" height="1" fill="#474747"/><rect x="0" y="499.3" width="4" height="1" fill="#474747"/><rect x="0" y="510.0" width="4" height="1" fill="#474747"/><rect x="0" y="520.6" width="4" height="1" fill="#474747"/><rect x="0" y="496.6" width="3.6" height="11" fill="#767676"/><rect x="3.4" y="496.6" width="1.3" height="11" fill="#3fae72"/></svg>
<div style="position:absolute;left:44.9px;top:139.5px;width:694px;height:68.3px;background:#fdeceb;border-radius:4.5px;box-shadow:-4.5px 0.5px 3.5px -0.5px rgba(0,0,0,0.46),4px 0.5px 3.5px -0.5px rgba(0,0,0,0.46),0 3px 2.5px -0.5px rgba(0,0,0,0.22);clip-path:inset(-1px -12px -12px -12px)"></div>
<span class="t" style="left:71.20px;top:153px;font-size:17.8px;color:#111;font-weight:700;transform:scaleX(0.968);transform-origin:0 0;">Los Angelos Crimes</span>
<span class="t" style="left:71.20px;top:175px;font-size:17.8px;color:#111;font-weight:700;transform:scaleX(0.947);transform-origin:0 0;">Analysis</span>
<span class="t" style="left:288.70px;top:155px;font-size:12.0px;color:#111;font-weight:700;transform:scaleX(0.980);transform-origin:0 0;"># Crimes</span>
<span class="t" style="left:287.80px;top:180px;font-size:14.6px;color:#c00000;font-weight:700;transform:scaleX(1.118);transform-origin:0 0;">743,817</span>
<span class="t" style="left:388.10px;top:155px;font-size:12.0px;color:#111;font-weight:700;">Crime Areas</span>
<span class="t" style="left:415.00px;top:180px;font-size:14.6px;color:#c00000;font-weight:700;transform:scaleX(0.979);transform-origin:0 0;">21</span>
<span class="t" style="left:497.20px;top:155px;font-size:12.0px;color:#111;font-weight:700;transform:scaleX(0.968);transform-origin:0 0;">Crimes Weapons</span>
<span class="t" style="left:534.40px;top:180px;font-size:14.6px;color:#c00000;font-weight:700;transform:scaleX(0.986);transform-origin:0 0;">79</span>
<span class="t" style="left:621.00px;top:155px;font-size:12.0px;color:#111;font-weight:700;transform:scaleX(0.989);transform-origin:0 0;">Peak Crime Region</span>
<span class="t" style="left:653.20px;top:179px;font-size:14.6px;color:#c00000;font-weight:700;transform:scaleX(1.040);transform-origin:0 0;">Central</span>
<div style="position:absolute;left:43.3px;top:211.8px;width:227.2px;height:132.7px;background:#fff;border:1.5px solid #b3b3b3;box-sizing:border-box;box-shadow:0 0 2.5px 1.6px #d3d3d3"></div>

<div style="position:absolute;left:275.3px;top:211.8px;width:229.6px;height:132.7px;background:#fff;border:1.5px solid #b3b3b3;box-sizing:border-box;box-shadow:0 0 2.5px 1.6px #d3d3d3"></div>
<div style="position:absolute;left:508.6px;top:211.8px;width:229.7px;height:132.7px;background:#fff;border:1.5px solid #b3b3b3;box-sizing:border-box;box-shadow:0 0 2.5px 1.6px #d3d3d3"></div>
<div style="position:absolute;left:43.3px;top:346.6px;width:227.2px;height:147.6px;background:#fff;border:1.5px solid #b3b3b3;box-sizing:border-box;box-shadow:0 0 2.5px 1.6px #d3d3d3"></div>
<div style="position:absolute;left:275.3px;top:346.6px;width:229.6px;height:147.6px;background:#fff;border:1.5px solid #b3b3b3;box-sizing:border-box;box-shadow:0 0 2.5px 1.6px #d3d3d3"></div>
<div style="position:absolute;left:508.6px;top:346.6px;width:229.7px;height:147.6px;background:#fff;border:1.5px solid #b3b3b3;box-sizing:border-box;box-shadow:0 0 2.5px 1.6px #d3d3d3"></div>
<svg style="position:absolute;left:0;top:0" width="1024" height="540" viewBox="0 0 1024 540"><rect x="54.3" y="325.6" width="206" height="0.8" fill="#d9d9d9"/><rect x="65.5" y="324.5" width="10.9" height="1.3" fill="#c94141"/><rect x="100" y="318.8" width="10.9" height="7.0" fill="#c94141"/><rect x="134.5" y="306.2" width="10.9" height="19.6" fill="#c94141"/><rect x="169.2" y="276.1" width="10.9" height="49.7" fill="#c94141"/><rect x="203.6" y="274.5" width="10.9" height="51.3" fill="#c94141"/><rect x="238" y="245.8" width="10.9" height="80.0" fill="#c94141"/><rect x="299" y="324.6" width="195.5" height="0.8" fill="#d9d9d9"/><path d="M307.3 245.3 C310.0 247.1 318.2 255.1 323.7 256.0 C329.2 256.9 334.7 251.0 340.1 250.6 C345.6 250.2 351.1 254.0 356.4 253.3 C361.7 252.6 366.6 243.8 372.0 246.3 C377.4 248.8 383.3 261.2 388.9 268.1 C394.4 275.0 399.9 284.2 405.3 287.7 C410.7 291.2 416.0 288.0 421.4 289.0 C426.8 290.0 432.3 294.1 437.8 293.6 C443.3 293.2 448.8 286.1 454.2 286.3 C459.6 286.5 464.6 293.9 470.0 294.7 C475.4 295.5 483.7 291.9 486.4 291.4" fill="none" stroke="#c00000" stroke-width="1.6" stroke-linecap="round"/><circle cx="307.3" cy="245.3" r="2.8" fill="#111"/><circle cx="470" cy="294.7" r="2.8" fill="#f7b0a8"/><rect x="616.2" y="241" width="0.7" height="92" fill="#d9d9d9"/><rect x="616.8" y="244.20" width="88.0" height="3.2" fill="#c00000"/><rect x="616.8" y="253.42" width="65.2" height="3.2" fill="#c00000"/><rect x="616.8" y="262.64" width="53.3" height="3.2" fill="#c00000"/><rect x="616.8" y="271.86" width="50.9" height="3.2" fill="#c00000"/><rect x="616.8" y="281.08" width="50.5" height="3.2" fill="#c00000"/><rect x="616.8" y="290.30" width="50.0" height="3.2" fill="#c00000"/><rect x="616.8" y="299.52" width="47.2" height="3.2" fill="#c00000"/><rect x="616.8" y="308.74" width="42.1" height="3.2" fill="#c00000"/><rect x="616.8" y="317.96" width="41.5" height="3.2" fill="#c00000"/><rect x="616.8" y="327.18" width="32.1" height="3.2" fill="#c00000"/><rect x="65.6" y="473.8" width="195.6" height="0.8" fill="#d9d9d9"/><path d="M70.4 423.9 C71.7 426.2 75.7 434.6 78.4 437.8 C81.0 441.0 83.7 441.5 86.4 443.1 C89.1 444.7 92.0 445.9 94.7 447.3 C97.4 448.6 100.0 450.2 102.7 451.1 C105.3 452.0 108.0 453.7 110.7 452.9 C113.4 452.0 116.2 447.7 119.0 446.1 C121.7 444.4 124.2 446.0 127.0 443.1 C129.7 440.2 132.5 431.0 135.3 428.9 C138.0 426.8 140.5 431.5 143.3 430.4 C146.0 429.2 148.8 423.4 151.6 422.1 C154.3 420.7 157.0 427.6 159.6 422.4 C162.1 417.1 164.0 391.2 166.7 390.7 C169.4 390.2 173.0 415.4 175.9 419.4 C178.7 423.4 181.2 416.0 183.9 414.7 C186.5 413.3 189.1 411.8 191.9 411.1 C194.6 410.4 197.4 411.8 200.1 410.5 C202.9 409.3 205.5 405.2 208.1 403.7 C210.8 402.2 213.4 401.0 216.1 401.6 C218.9 402.3 221.7 406.8 224.4 407.6 C227.2 408.3 229.8 405.5 232.4 406.4 C235.1 407.2 237.7 411.3 240.4 412.6 C243.2 413.9 246.0 412.2 248.7 414.1 C251.5 416.0 255.4 422.2 256.7 423.9" fill="none" stroke="#cf2f2f" stroke-width="1.4" stroke-linecap="round"/><circle cx="166.7" cy="390.7" r="2.4" fill="#111"/><circle cx="110.7" cy="452.9" r="2.6" fill="#f7b0a8"/><rect x="340" y="375.5" width="0.7" height="108.5" fill="#d9d9d9"/><rect x="340.5" y="377.90" width="139.3" height="3" fill="#d0343a"/><rect x="340.5" y="386.27" width="102.2" height="3" fill="#d0343a"/><rect x="340.5" y="394.65" width="93.2" height="3" fill="#d0343a"/><rect x="340.5" y="403.02" width="65.2" height="3" fill="#d0343a"/><rect x="340.5" y="411.40" width="36.2" height="3" fill="#d0343a"/><rect x="340.5" y="419.77" width="9.9" height="3" fill="#d0343a"/><rect x="340.5" y="428.15" width="2.4" height="3" fill="#d0343a"/><rect x="340.5" y="436.52" width="1.9" height="3" fill="#d0343a"/><rect x="340.5" y="444.90" width="1.7" height="3" fill="#d0343a"/><rect x="340.5" y="453.27" width="0.6" height="3" fill="#d0343a"/><rect x="340.5" y="461.65" width="0.5" height="3" fill="#d0343a"/><rect x="340.5" y="470.02" width="0.5" height="3" fill="#d0343a"/><rect x="340.5" y="478.40" width="0.5" height="3" fill="#d0343a"/><path d="M597.3 429.9 L597.30 384.20 A45.7 45.7 0 0 1 630.67 461.13 Z" fill="#f9b9b0" stroke="#fff" stroke-width="0.9" stroke-linejoin="round"/><path d="M597.3 429.9 L630.67 461.13 A45.7 45.7 0 0 1 552.65 420.14 Z" fill="#c86464" stroke="#fff" stroke-width="0.9" stroke-linejoin="round"/><path d="M597.3 429.9 L552.65 420.14 A45.7 45.7 0 0 1 597.30 384.20 Z" fill="#8b0000" stroke="#fff" stroke-width="0.9" stroke-linejoin="round"/><rect x="673.6" y="404.5" width="3.2" height="3.2" fill="#f9b9b0"/><rect x="673.6" y="423.09999999999997" width="3.2" height="3.2" fill="#c86464"/><rect x="673.6" y="441.79999999999995" width="3.2" height="3.2" fill="#8b0000"/></svg>
<span class="t" style="left:105.30px;top:220px;font-size:10.8px;color:#404040;transform:scaleX(0.973);transform-origin:0 0;">Crimes by</span><span class="t" style="left:156.80px;top:220px;font-size:10.8px;color:#c00000;font-weight:700;transform:scaleX(0.939);transform-origin:0 0;">Age Group</span>
<span class="t" style="left:62.52px;top:331px;font-size:7.4px;color:#404040;">Child</span>
<span class="t" style="left:62.19px;top:313px;font-size:7.0px;color:#404040;">5,343</span>
<span class="t" style="left:97.43px;top:331px;font-size:7.4px;color:#404040;">Teen</span>
<span class="t" style="left:94.74px;top:307px;font-size:7.0px;color:#404040;">25,804</span>
<span class="t" style="left:129.25px;top:331px;font-size:7.4px;color:#404040;">Senior</span>
<span class="t" style="left:129.24px;top:295px;font-size:7.0px;color:#404040;">69,452</span>
<span class="t" style="left:163.75px;top:331px;font-size:7.4px;color:#404040;">Middle</span>
<span class="t" style="left:162.00px;top:264px;font-size:7.0px;color:#404040;">176,200</span>
<span class="t" style="left:200.62px;top:331px;font-size:7.4px;color:#404040;">Baby</span>
<span class="t" style="left:196.40px;top:263px;font-size:7.0px;color:#404040;">182,469</span>
<span class="t" style="left:235.02px;top:331px;font-size:7.4px;color:#404040;">Adult</span>
<span class="t" style="left:230.80px;top:234px;font-size:7.0px;color:#404040;">284,549</span>
<span class="t" style="left:346.50px;top:220px;font-size:10.8px;color:#404040;transform:scaleX(0.965);transform-origin:0 0;">Crimes by</span><span class="t" style="left:397.50px;top:220px;font-size:10.8px;color:#c00000;font-weight:700;transform:scaleX(0.930);transform-origin:0 0;">Months</span>
<span class="t" style="left:281.50px;top:236px;font-size:7.0px;color:#404040;transform:scaleX(1.020);transform-origin:0 0;">75K</span>
<span class="t" style="left:281.50px;top:248px;font-size:7.0px;color:#404040;transform:scaleX(1.020);transform-origin:0 0;">70K</span>
<span class="t" style="left:281.50px;top:260px;font-size:7.0px;color:#404040;transform:scaleX(1.020);transform-origin:0 0;">65K</span>
<span class="t" style="left:281.50px;top:273px;font-size:7.0px;color:#404040;transform:scaleX(1.020);transform-origin:0 0;">60K</span>
<span class="t" style="left:281.50px;top:285px;font-size:7.0px;color:#404040;transform:scaleX(1.020);transform-origin:0 0;">55K</span>
<span class="t" style="left:281.50px;top:297px;font-size:7.0px;color:#404040;transform:scaleX(1.020);transform-origin:0 0;">50K</span>
<span class="t" style="left:281.50px;top:309px;font-size:7.0px;color:#404040;transform:scaleX(1.020);transform-origin:0 0;">45K</span>
<span class="t" style="left:281.50px;top:322px;font-size:7.0px;color:#404040;transform:scaleX(1.020);transform-origin:0 0;">40K</span>
<span class="t" style="left:301.50px;top:331px;font-size:7.2px;color:#404040;">Jan</span>
<span class="t" style="left:317.38px;top:331px;font-size:7.2px;color:#404040;">Feb</span>
<span class="t" style="left:333.66px;top:331px;font-size:7.2px;color:#404040;">Mar</span>
<span class="t" style="left:350.54px;top:331px;font-size:7.2px;color:#404040;">Apr</span>
<span class="t" style="left:365.62px;top:331px;font-size:7.2px;color:#404040;">May</span>
<span class="t" style="left:382.90px;top:331px;font-size:7.2px;color:#404040;">Jun</span>
<span class="t" style="left:400.38px;top:331px;font-size:7.2px;color:#404040;">Jul</span>
<span class="t" style="left:414.85px;top:331px;font-size:7.2px;color:#404040;">Aug</span>
<span class="t" style="left:431.13px;top:331px;font-size:7.2px;color:#404040;">Sep</span>
<span class="t" style="left:448.22px;top:331px;font-size:7.2px;color:#404040;">Oct</span>
<span class="t" style="left:463.70px;top:331px;font-size:7.2px;color:#404040;">Nov</span>
<span class="t" style="left:479.98px;top:331px;font-size:7.2px;color:#404040;">Dec</span>
<span class="t" style="left:315.00px;top:243px;font-size:7.6px;color:#222;font-weight:700;transform:scaleX(1.004);transform-origin:0 0;">73K</span>
<span class="t" style="left:468.60px;top:300px;font-size:7.6px;color:#222;font-weight:700;transform:scaleX(0.961);transform-origin:0 0;">52K</span>
<span class="t" style="left:577.30px;top:220px;font-size:10.8px;color:#404040;transform:scaleX(0.935);transform-origin:0 0;">Top 10</span><span class="t" style="left:611.90px;top:220px;font-size:10.8px;color:#c00000;font-weight:700;transform:scaleX(0.986);transform-origin:0 0;">Crime Type</span>
<span class="t" style="left:558.80px;top:242px;font-size:7.2px;color:#454545;font-weight:700;transform:scaleX(0.962);transform-origin:0 0;">Vehicle - Stolen</span>
<span class="t" style="left:709.62px;top:242px;font-size:7.0px;color:#404040;">79,513</span>
<span class="t" style="left:532.50px;top:252px;font-size:7.2px;color:#454545;font-weight:700;transform:scaleX(0.946);transform-origin:0 0;">Battery - Simple Assault</span>
<span class="t" style="left:686.80px;top:252px;font-size:7.0px;color:#404040;">58,896</span>
<span class="t" style="left:555.50px;top:261px;font-size:7.2px;color:#454545;font-weight:700;transform:scaleX(0.987);transform-origin:0 0;">Theft Of Identity</span>
<span class="t" style="left:674.91px;top:261px;font-size:7.0px;color:#404040;">48,155</span>
<span class="t" style="left:537.60px;top:270px;font-size:7.2px;color:#454545;font-weight:700;transform:scaleX(0.955);transform-origin:0 0;">Burglary From Vehicle</span>
<span class="t" style="left:672.54px;top:270px;font-size:7.0px;color:#404040;">46,016</span>
<span class="t" style="left:520.10px;top:279px;font-size:7.2px;color:#454545;font-weight:700;transform:scaleX(0.959);transform-origin:0 0;">Vandalism - Felony ($400 &amp;...</span>
<span class="t" style="left:672.11px;top:279px;font-size:7.0px;color:#404040;">45,626</span>
<span class="t" style="left:583.20px;top:289px;font-size:7.2px;color:#454545;font-weight:700;transform:scaleX(0.905);transform-origin:0 0;">Burglary</span>
<span class="t" style="left:671.60px;top:288px;font-size:7.0px;color:#404040;">45,164</span>
<span class="t" style="left:514.70px;top:298px;font-size:7.2px;color:#454545;font-weight:700;transform:scaleX(0.936);transform-origin:0 0;">Assault With Deadly Weapon,...</span>
<span class="t" style="left:668.78px;top:298px;font-size:7.0px;color:#404040;">42,616</span>
<span class="t" style="left:522.30px;top:307px;font-size:7.2px;color:#454545;font-weight:700;transform:scaleX(0.981);transform-origin:0 0;">Theft Plain - Petty ($950 &amp;...</span>
<span class="t" style="left:663.74px;top:307px;font-size:7.0px;color:#404040;">38,065</span>
<span class="t" style="left:527.60px;top:316px;font-size:7.2px;color:#454545;font-weight:700;transform:scaleX(0.961);transform-origin:0 0;">Intimate Partner - Simple...</span>
<span class="t" style="left:663.12px;top:316px;font-size:7.0px;color:#404040;">37,508</span>
<span class="t" style="left:521.70px;top:325px;font-size:7.2px;color:#454545;font-weight:700;transform:scaleX(0.963);transform-origin:0 0;">Theft From Motor Vehicle -...</span>
<span class="t" style="left:653.73px;top:325px;font-size:7.0px;color:#404040;">29,021</span>
<span class="t" style="left:79.30px;top:356px;font-size:10.8px;color:#404040;transform:scaleX(1.016);transform-origin:0 0;">What is the</span><span class="t" style="left:138.20px;top:356px;font-size:10.8px;color:#c00000;font-weight:700;transform:scaleX(0.952);transform-origin:0 0;">Peak Crimes hour</span><span class="t" style="left:230.00px;top:356px;font-size:10.8px;color:#404040;">?</span>
<span class="t" style="left:47.96px;top:373px;font-size:6.6px;color:#404040;">60K</span>
<span class="t" style="left:47.96px;top:389px;font-size:6.6px;color:#404040;">50K</span>
<span class="t" style="left:47.96px;top:406px;font-size:6.6px;color:#404040;">40K</span>
<span class="t" style="left:47.96px;top:422px;font-size:6.6px;color:#404040;">30K</span>
<span class="t" style="left:47.96px;top:439px;font-size:6.6px;color:#404040;">20K</span>
<span class="t" style="left:47.96px;top:455px;font-size:6.6px;color:#404040;">10K</span>
<span class="t" style="left:51.63px;top:472px;font-size:6.6px;color:#404040;">0K</span>
<span class="t" style="left:68.56px;top:481px;font-size:6.6px;color:#404040;letter-spacing:-0.300px;">0</span>
<span class="t" style="left:76.66px;top:481px;font-size:6.6px;color:#404040;letter-spacing:-0.300px;">1</span>
<span class="t" style="left:84.76px;top:481px;font-size:6.6px;color:#404040;letter-spacing:-0.300px;">2</span>
<span class="t" style="left:92.86px;top:481px;font-size:6.6px;color:#404040;letter-spacing:-0.300px;">3</span>
<span class="t" style="left:100.96px;top:481px;font-size:6.6px;color:#404040;letter-spacing:-0.300px;">4</span>
<span class="t" style="left:109.06px;top:481px;font-size:6.6px;color:#404040;letter-spacing:-0.300px;">5</span>
<span class="t" style="left:117.16px;top:481px;font-size:6.6px;color:#404040;letter-spacing:-0.300px;">6</span>
<span class="t" style="left:125.26px;top:481px;font-size:6.6px;color:#404040;letter-spacing:-0.300px;">7</span>
<span class="t" style="left:133.36px;top:481px;font-size:6.6px;color:#404040;letter-spacing:-0.300px;">8</span>
<span class="t" style="left:141.46px;top:481px;font-size:6.6px;color:#404040;letter-spacing:-0.300px;">9</span>
<span class="t" style="left:147.88px;top:481px;font-size:6.6px;color:#404040;letter-spacing:-0.300px;">10</span>
<span class="t" style="left:156.22px;top:481px;font-size:6.6px;color:#404040;letter-spacing:-0.300px;">11</span>
<span class="t" style="left:164.08px;top:481px;font-size:6.6px;color:#404040;letter-spacing:-0.300px;">12</span>
<span class="t" style="left:172.18px;top:481px;font-size:6.6px;color:#404040;letter-spacing:-0.300px;">13</span>
<span class="t" style="left:180.28px;top:481px;font-size:6.6px;color:#404040;letter-spacing:-0.300px;">14</span>
<span class="t" style="left:188.38px;top:481px;font-size:6.6px;color:#404040;letter-spacing:-0.300px;">15</span>
<span class="t" style="left:196.48px;top:481px;font-size:6.6px;color:#404040;letter-spacing:-0.300px;">16</span>
<span class="t" style="left:204.58px;top:481px;font-size:6.6px;color:#404040;letter-spacing:-0.300px;">17</span>
<span class="t" style="left:212.68px;top:481px;font-size:6.6px;color:#404040;letter-spacing:-0.300px;">18</span>
<span class="t" style="left:220.78px;top:481px;font-size:6.6px;color:#404040;letter-spacing:-0.300px;">19</span>
<span class="t" style="left:228.88px;top:481px;font-size:6.6px;color:#404040;letter-spacing:-0.300px;">20</span>
<span class="t" style="left:236.98px;top:481px;font-size:6.6px;color:#404040;letter-spacing:-0.300px;">21</span>
<span class="t" style="left:245.08px;top:481px;font-size:6.6px;color:#404040;letter-spacing:-0.300px;">22</span>
<span class="t" style="left:253.18px;top:481px;font-size:6.6px;color:#404040;letter-spacing:-0.300px;">23</span>
<span class="t" style="left:94.70px;top:378px;font-size:8.0px;color:#111;font-weight:700;transform:scaleX(1.028);transform-origin:0 0;">Peak Crimes</span>
<span class="t" style="left:94.70px;top:390px;font-size:8.0px;color:#111;font-weight:700;">hour : </span>
<span class="t" style="left:122.80px;top:387px;font-size:10.6px;color:#f01010;font-weight:700;transform:scaleX(0.956);transform-origin:0 0;">12 PM</span>
<span class="t" style="left:161.00px;top:377px;font-size:7.4px;color:#222;font-weight:700;transform:scaleX(1.009);transform-origin:0 0;">51K</span>
<span class="t" style="left:105.60px;top:440px;font-size:7.4px;color:#222;font-weight:700;transform:scaleX(0.987);transform-origin:0 0;">13K</span>
<span class="t" style="left:326.30px;top:355px;font-size:10.8px;color:#404040;transform:scaleX(0.965);transform-origin:0 0;">Crimes by</span><span class="t" style="left:377.30px;top:355px;font-size:10.8px;color:#c00000;font-weight:700;transform:scaleX(0.981);transform-origin:0 0;">Victim Descent</span>
<span class="t" style="left:307.00px;top:376px;font-size:7.0px;color:#454545;font-weight:700;transform:scaleX(0.936);transform-origin:0 0;">Hispanic</span>
<span class="t" style="left:479.20px;top:377px;font-size:6.8px;color:#404040;transform:scaleX(0.939);transform-origin:0 0;">228418</span>
<span class="t" style="left:304.10px;top:384px;font-size:7.0px;color:#454545;font-weight:700;transform:scaleX(0.959);transform-origin:0 0;">Unknown</span>
<span class="t" style="left:447.51px;top:385px;font-size:6.8px;color:#404040;letter-spacing:-0.200px;">167557</span>
<span class="t" style="left:315.00px;top:393px;font-size:7.0px;color:#454545;font-weight:700;transform:scaleX(1.013);transform-origin:0 0;">White</span>
<span class="t" style="left:438.53px;top:394px;font-size:6.8px;color:#404040;letter-spacing:-0.200px;">152841</span>
<span class="t" style="left:316.80px;top:401px;font-size:7.0px;color:#454545;font-weight:700;transform:scaleX(0.936);transform-origin:0 0;">Black</span>
<span class="t" style="left:410.51px;top:402px;font-size:6.8px;color:#404040;letter-spacing:-0.200px;">106905</span>
<span class="t" style="left:315.90px;top:409px;font-size:7.0px;color:#454545;font-weight:700;transform:scaleX(0.986);transform-origin:0 0;">Other</span>
<span class="t" style="left:381.49px;top:410px;font-size:6.8px;color:#404040;letter-spacing:-0.200px;">59333</span>
<span class="t" style="left:317.40px;top:418px;font-size:7.0px;color:#454545;font-weight:700;transform:scaleX(0.887);transform-origin:0 0;">Asian</span>
<span class="t" style="left:355.20px;top:419px;font-size:6.8px;color:#404040;letter-spacing:-0.200px;">16232</span>
<span class="t" style="left:311.50px;top:426px;font-size:7.0px;color:#454545;font-weight:700;transform:scaleX(0.945);transform-origin:0 0;">Korean</span>
<span class="t" style="left:347.71px;top:427px;font-size:6.8px;color:#404040;letter-spacing:-0.200px;">3951</span>
<span class="t" style="left:310.00px;top:435px;font-size:7.0px;color:#454545;font-weight:700;transform:scaleX(0.976);transform-origin:0 0;">Filipino</span>
<span class="t" style="left:347.18px;top:436px;font-size:6.8px;color:#404040;letter-spacing:-0.200px;">3084</span>
<span class="t" style="left:308.50px;top:443px;font-size:7.0px;color:#454545;font-weight:700;transform:scaleX(0.947);transform-origin:0 0;">Chinese</span>
<span class="t" style="left:347.00px;top:444px;font-size:6.8px;color:#404040;letter-spacing:-0.200px;">2786</span>
<span class="t" style="left:304.10px;top:451px;font-size:7.0px;color:#454545;font-weight:700;transform:scaleX(0.946);transform-origin:0 0;">Japanese</span>
<span class="t" style="left:345.94px;top:452px;font-size:6.8px;color:#404040;letter-spacing:-0.200px;">1049</span>
<span class="t" style="left:303.20px;top:460px;font-size:7.0px;color:#454545;font-weight:700;transform:scaleX(1.147);transform-origin:0 0;">Vietnam</span>
<span class="t" style="left:345.80px;top:461px;font-size:6.8px;color:#404040;letter-spacing:-0.200px;">748</span>
<span class="t" style="left:281.30px;top:468px;font-size:7.0px;color:#454545;font-weight:700;transform:scaleX(0.973);transform-origin:0 0;">American Indian</span>
<span class="t" style="left:345.80px;top:469px;font-size:6.8px;color:#404040;letter-spacing:-0.200px;">708</span>
<span class="t" style="left:291.30px;top:476px;font-size:7.0px;color:#454545;font-weight:700;transform:scaleX(0.961);transform-origin:0 0;">Pacific Island</span>
<span class="t" style="left:345.80px;top:477px;font-size:6.8px;color:#404040;letter-spacing:-0.200px;">205</span>
<span class="t" style="left:567.70px;top:355px;font-size:10.8px;color:#404040;transform:scaleX(0.969);transform-origin:0 0;">Crimes by</span><span class="t" style="left:619.00px;top:355px;font-size:10.8px;color:#c00000;font-weight:700;transform:scaleX(0.980);transform-origin:0 0;">Victime Sex</span>
<span class="t" style="left:607.70px;top:417px;font-size:7.6px;color:#404040;font-weight:700;transform:scaleX(1.077);transform-origin:0 0;">274,977</span>
<span class="t" style="left:562.00px;top:441px;font-size:7.6px;color:#404040;font-weight:700;transform:scaleX(1.081);transform-origin:0 0;">308,295</span>
<span class="t" style="left:562.00px;top:408px;font-size:7.6px;color:#fff;font-weight:700;transform:scaleX(1.081);transform-origin:0 0;">160,462</span>
<span class="t" style="left:679.40px;top:403px;font-size:7.6px;color:#404040;font-weight:700;transform:scaleX(1.016);transform-origin:0 0;">Female</span>
<span class="t" style="left:679.40px;top:421px;font-size:7.6px;color:#404040;font-weight:700;">Male</span>
<span class="t" style="left:679.40px;top:440px;font-size:7.6px;color:#404040;font-weight:700;transform:scaleX(0.988);transform-origin:0 0;">Unknown</span>
<div style="position:absolute;left:745px;top:141px;width:253px;height:70px;background:#fff;border:1px solid #f3a596;box-sizing:border-box"></div>
<div style="position:absolute;left:749.2px;top:155.8px;width:244.5px;height:1px;background:#f3a596"></div>
<span class="t" style="left:749.60px;top:145px;font-size:7.8px;color:#111;font-weight:700;transform:scaleX(0.887);transform-origin:0 0;">DATE OCC</span>
<span class="t" style="left:749.60px;top:161px;font-size:7.6px;color:#e0492b;transform:scaleX(0.919);transform-origin:0 0;">All Periods</span>
<span class="t" style="left:957.10px;top:162px;font-size:6.6px;color:#555;transform:scaleX(0.902);transform-origin:0 0;">MONTHS</span>
<span class="t" style="left:750.40px;top:175px;font-size:6.6px;color:#6a6a6a;transform:scaleX(0.906);transform-origin:0 0;">2020</span>
<span class="t" style="left:750.10px;top:187px;font-size:6.6px;color:#7a7a7a;transform:scaleX(0.874);transform-origin:0 0;">JAN</span>
<span class="t" style="left:779.00px;top:187px;font-size:6.6px;color:#7a7a7a;transform:scaleX(0.826);transform-origin:0 0;">FEB</span>
<span class="t" style="left:806.20px;top:187px;font-size:6.6px;color:#7a7a7a;transform:scaleX(0.914);transform-origin:0 0;">MAR</span>
<span class="t" style="left:834.80px;top:187px;font-size:6.6px;color:#7a7a7a;transform:scaleX(0.818);transform-origin:0 0;">APR</span>
<span class="t" style="left:863.00px;top:187px;font-size:6.6px;color:#7a7a7a;transform:scaleX(0.941);transform-origin:0 0;">MAY</span>
<span class="t" style="left:891.90px;top:187px;font-size:6.6px;color:#7a7a7a;transform:scaleX(0.857);transform-origin:0 0;">JUN</span>
<span class="t" style="left:919.30px;top:187px;font-size:6.6px;color:#7a7a7a;transform:scaleX(0.827);transform-origin:0 0;">JUL</span>
<span class="t" style="left:948.50px;top:187px;font-size:6.6px;color:#7a7a7a;transform:scaleX(0.916);transform-origin:0 0;">AUG</span>
<span class="t" style="left:977.40px;top:187px;font-size:6.6px;color:#7a7a7a;transform:scaleX(0.810);transform-origin:0 0;">SEP</span>
<svg style="position:absolute;left:0;top:0" width="1024" height="540" viewBox="0 0 1024 540"><defs><linearGradient id="tg" x1="0" y1="0" x2="0" y2="1"><stop offset="0" stop-color="#f4764f"/><stop offset="0.44" stop-color="#f06b47"/><stop offset="0.48" stop-color="#e5583a"/><stop offset="0.7" stop-color="#e05236"/><stop offset="0.76" stop-color="#c23a20"/><stop offset="1" stop-color="#b93119"/></linearGradient></defs><rect x="749.6" y="196" width="244.1" height="9.6" fill="url(#tg)"/><rect x="777.8000000000001" y="196" width="0.8" height="9.6" fill="#f7b9a8"/><rect x="804.8000000000001" y="196" width="0.8" height="9.6" fill="#f7b9a8"/><rect x="833.2" y="196" width="0.8" height="9.6" fill="#f7b9a8"/><rect x="861.8000000000001" y="196" width="0.8" height="9.6" fill="#f7b9a8"/><rect x="890.3000000000001" y="196" width="0.8" height="9.6" fill="#f7b9a8"/><rect x="917.7" y="196" width="0.8" height="9.6" fill="#f7b9a8"/><rect x="946.6" y="196" width="0.8" height="9.6" fill="#f7b9a8"/><rect x="975.7" y="196" width="0.8" height="9.6" fill="#f7b9a8"/><path d="M986.6 164 L988.5 166 L990.4 164 Z" fill="#777"/><path d="M985 144.3 H992 L989.3 147.5 V150.5 L987.7 149.3 V147.5 Z" fill="#9a9a9a"/><path d="M989 148.5 l3.5 3.5 M992.5 148.5 l-3.5 3.5" stroke="#9a9a9a" stroke-width="0.8"/><rect x="750" y="208.8" width="48" height="1.6" fill="#e6e6e6"/><rect x="985" y="208.6" width="8" height="1.8" fill="#dcdcdc"/></svg>
<svg style="position:absolute;left:0;top:0" width="1024" height="540" viewBox="0 0 1024 540"><defs><clipPath id="mc"><rect x="745.0" y="214.0" width="253.5" height="279.2"/></clipPath><filter id="hb" x="-20%" y="-20%" width="140%" height="140%"><feGaussianBlur stdDeviation="2.2"/></filter><filter id="hb2" x="-20%" y="-20%" width="140%" height="140%"><feGaussianBlur stdDeviation="1.3"/></filter><filter id="gb" x="-20%" y="-20%" width="140%" height="140%"><feGaussianBlur stdDeviation="1.2"/></filter><pattern id="grid" width="3.4" height="3.4" patternUnits="userSpaceOnUse"><path d="M0 0.5 H3.4 M0.5 0 V3.4" stroke="#ddd7c4" stroke-width="0.8"/></pattern><linearGradient id="lg" x1="0" y1="0" x2="1" y2="0"><stop offset="0" stop-color="#fcc3ba"/><stop offset="0.5" stop-color="#ee6f5c"/><stop offset="1" stop-color="#b1000f"/></linearGradient></defs><g clip-path="url(#mc)"><rect x="745.0" y="214.0" width="253.5" height="279.2" fill="#c6c4bf"/><g filter="url(#gb)"><path d="M815.0 236.0 L873.0 236.0 L890.0 240.0 L914.0 247.0 L931.0 250.0 L935.0 266.0 L953.0 266.0 L940.0 290.0 L900.0 300.0 L850.0 300.0 L835.0 290.0 L815.0 286.0 Z" fill="#cbc9c3" /><path d="M925.0 294.0 L940.0 277.0 L953.0 266.0 L963.0 277.0 L998.5 279.0 L1002.0 500.0 L866.0 500.0 L862.0 465.0 L873.0 440.0 L870.0 405.0 L862.0 383.0 L856.0 368.0 L868.0 350.0 L885.0 335.0 L905.0 310.0 Z" fill="#cecbc4" /></g><path d="M925.0 294.0 L940.0 277.0 L953.0 266.0 L963.0 277.0 L998.5 279.0 L1002.0 500.0 L866.0 500.0 L862.0 465.0 L873.0 440.0 L870.0 405.0 L862.0 383.0 L856.0 368.0 L868.0 350.0 L885.0 335.0 L905.0 310.0 Z" fill="url(#grid)" opacity="0.9"/><g filter="url(#gb)"><path d="M876.0 214.0 L998.5 214.0 L998.5 279.0 L963.0 277.0 L953.0 266.0 L935.0 266.0 L931.0 250.0 L914.0 247.0 L900.0 244.0 L888.0 238.0 L876.0 231.0 Z" fill="#abb892" /><path d="M796.0 214.0 L812.0 214.0 L812.0 232.0 L800.0 234.0 Z" fill="#b0bc98" /><path d="M838.0 214.0 L846.0 214.0 L843.0 224.0 Z" fill="#b0bc98" /><path d="M757.0 250.0 L766.0 249.0 L776.0 256.0 L781.0 268.0 L784.0 287.0 L778.0 288.0 L774.0 276.0 L766.0 268.0 L758.0 262.0 Z" fill="#b0bc98" /><path d="M745.0 318.0 L756.0 312.0 L764.0 330.0 L758.0 346.0 L745.0 344.0 Z" fill="#b0bc98" /><path d="M770.0 308.0 L790.0 305.0 L800.0 318.0 L790.0 330.0 L772.0 326.0 Z" fill="#b0bc98" /><path d="M806.0 330.0 L820.0 328.0 L822.0 340.0 L808.0 341.0 Z" fill="#b0bc98" /><path d="M826.0 300.0 L842.0 296.0 L848.0 320.0 L838.0 336.0 L828.0 326.0 Z" fill="#b0bc98" /><path d="M770.0 296.0 L790.0 292.0 L796.0 300.0 L774.0 304.0 Z" fill="#b0bc98" /><path d="M820.0 290.0 L832.0 288.0 L834.0 298.0 L822.0 300.0 Z" fill="#b0bc98" /><path d="M838.0 296.0 L850.0 292.0 L852.0 304.0 L840.0 306.0 Z" fill="#b0bc98" /></g><path d="M745.0 343.0 L752.0 350.0 L757.0 356.0 L762.5 348.5 L778.0 345.0 L794.0 342.0 L810.0 341.0 L825.5 340.2 L836.0 345.0 L844.0 351.3 L851.0 360.0 L855.0 366.0 L862.5 382.8 L868.0 400.0 L871.0 415.0 L873.0 430.0 L873.0 445.0 L868.0 452.0 L864.0 462.0 L864.0 474.0 L870.0 483.0 L882.0 488.0 L896.0 489.5 L903.0 493.2 L745.0 493.2 Z" fill="#a8b8c2" /><path d="M907.0 493.2 L910.0 474.0 L916.0 469.0 L925.0 467.0 L934.0 470.0 L944.0 468.5 L952.0 472.0 L962.0 474.0 L972.0 480.0 L980.0 487.0 L986.0 493.2 Z" fill="#a8b8c2" /><path d="M745.0 343.0 L752.0 350.0 L757.0 355.5 L762.5 348.0 L778.0 344.5 L794.0 341.5 L810.0 340.5 L825.5 339.7 L836.0 344.5 L846.0 352.0" fill="none" stroke="#e3b565" stroke-width="1.1" stroke-linejoin="round" stroke-linecap="round" /><path d="M815.3 236.0 L815.5 270.0 L818.0 304.6 L816.0 316.0 L820.0 328.0 L823.6 340.0" fill="none" stroke="#e3b565" stroke-width="1" stroke-linejoin="round" stroke-linecap="round" /><path d="M986.7 214.0 L983.0 221.3 L988.5 230.5 L981.0 236.0 L970.0 238.0 L958.9 241.6 L951.0 238.0 L944.0 238.0 L932.0 243.5 L934.8 254.6 L931.0 263.9" fill="none" stroke="#e0a94f" stroke-width="1.1" stroke-linejoin="round" stroke-linecap="round" /><path d="M967.0 290.0 L967.0 332.0" fill="none" stroke="#e2cc96" stroke-width="0.9" stroke-linejoin="round" stroke-linecap="round" /><path d="M948.0 300.0 L948.0 326.0" fill="none" stroke="#e2cc96" stroke-width="0.9" stroke-linejoin="round" stroke-linecap="round" /><path d="M976.0 340.0 L976.0 420.0" fill="none" stroke="#e2cc96" stroke-width="0.9" stroke-linejoin="round" stroke-linecap="round" /><path d="M992.0 400.0 L992.0 493.0" fill="none" stroke="#e2cc96" stroke-width="0.9" stroke-linejoin="round" stroke-linecap="round" /><path d="M902.0 400.0 L902.0 430.0" fill="none" stroke="#e2cc96" stroke-width="0.9" stroke-linejoin="round" stroke-linecap="round" /><path d="M888.0 400.0 L888.0 470.0" fill="none" stroke="#e2cc96" stroke-width="0.9" stroke-linejoin="round" stroke-linecap="round" /><path d="M960.0 330.0 L960.0 360.0" fill="none" stroke="#e2cc96" stroke-width="0.9" stroke-linejoin="round" stroke-linecap="round" /><path d="M875.0 404.0 L960.0 404.0" fill="none" stroke="#e2cc96" stroke-width="0.9" stroke-linejoin="round" stroke-linecap="round" /><path d="M880.0 452.0 L960.0 452.0" fill="none" stroke="#e2cc96" stroke-width="0.9" stroke-linejoin="round" stroke-linecap="round" /><path d="M875.0 437.0 L905.0 437.0" fill="none" stroke="#e2cc96" stroke-width="0.9" stroke-linejoin="round" stroke-linecap="round" /><path d="M950.0 372.0 L998.0 372.0" fill="none" stroke="#e2cc96" stroke-width="0.9" stroke-linejoin="round" stroke-linecap="round" /><path d="M940.0 360.0 L975.0 360.0" fill="none" stroke="#e2cc96" stroke-width="0.9" stroke-linejoin="round" stroke-linecap="round" /><path d="M950.0 340.0 L975.0 362.0 L998.0 385.0" fill="none" stroke="#e2cc96" stroke-width="1" stroke-linejoin="round" stroke-linecap="round" /><path d="M948.0 400.0 L948.0 456.0" fill="none" stroke="#e2cc96" stroke-width="1.1" stroke-linejoin="round" stroke-linecap="round" /><path d="M989.6 380.0 L989.6 493.0" fill="none" stroke="#e2cc96" stroke-width="1.1" stroke-linejoin="round" stroke-linecap="round" /><path d="M920.0 396.0 L920.0 440.0" fill="none" stroke="#e2cc96" stroke-width="1.1" stroke-linejoin="round" stroke-linecap="round" /><path d="M935.0 300.0 L935.0 330.0" fill="none" stroke="#e2cc96" stroke-width="1.1" stroke-linejoin="round" stroke-linecap="round" /><path d="M981.0 296.0 L981.0 330.0" fill="none" stroke="#e2cc96" stroke-width="1.1" stroke-linejoin="round" stroke-linecap="round" /><path d="M875.0 395.0 L875.0 440.0" fill="none" stroke="#e2cc96" stroke-width="1.1" stroke-linejoin="round" stroke-linecap="round" /><path d="M930.0 453.7 L998.0 453.7" fill="none" stroke="#e2cc96" stroke-width="1.1" stroke-linejoin="round" stroke-linecap="round" /><path d="M930.0 437.0 L998.0 437.0" fill="none" stroke="#e2cc96" stroke-width="1.1" stroke-linejoin="round" stroke-linecap="round" /><path d="M925.0 385.0 L998.0 385.0" fill="none" stroke="#e2cc96" stroke-width="1.1" stroke-linejoin="round" stroke-linecap="round" /><path d="M930.0 310.0 L998.0 310.0" fill="none" stroke="#e2cc96" stroke-width="1.1" stroke-linejoin="round" stroke-linecap="round" /><path d="M880.0 470.0 L905.0 470.0" fill="none" stroke="#e2cc96" stroke-width="1.1" stroke-linejoin="round" stroke-linecap="round" /><path d="M875.0 425.0 L905.0 425.0" fill="none" stroke="#e2cc96" stroke-width="1.1" stroke-linejoin="round" stroke-linecap="round" /><path d="M948.5 455.6 L960.0 472.0 L974.4 492.6" fill="none" stroke="#e2cc96" stroke-width="1.2" stroke-linejoin="round" stroke-linecap="round" /><path d="M745.0 300.0 L750.0 292.0 L752.0 284.0" fill="none" stroke="#e2cc96" stroke-width="0.9" stroke-linejoin="round" stroke-linecap="round" /><path d="M958.0 446.0 L966.0 470.0 L975.0 493.0" fill="none" stroke="#e2cc96" stroke-width="0.9" stroke-linejoin="round" stroke-linecap="round" /><path d="M744.0 227.7 L755.0 229.6 L770.0 231.0 L801.4 231.4 L807.0 237.0 L818.0 235.0 L840.3 234.2 L855.0 232.4 L873.6 236.0" fill="none" stroke="#a08ab0" stroke-width="1.9" stroke-linejoin="round" stroke-linecap="round" /><path d="M745.0 241.6 L746.8 267.6 L749.6 280.5 L762.5 291.6 L781.0 295.3 L792.0 291.6 L808.8 284.2 L823.6 281.4 L847.7 282.4 L873.6 286.0 L888.5 288.9 L907.0 288.0 L925.5 291.6 L944.0 290.7 L958.9 289.8 L981.0 293.5 L998.5 299.0" fill="none" stroke="#a08ab0" stroke-width="1.9" stroke-linejoin="round" stroke-linecap="round" /><path d="M847.7 213.9 L852.0 222.0 L857.0 230.5 L866.0 244.0 L873.6 254.6 L882.0 270.0 L890.0 284.0 L896.0 300.0 L902.0 312.0" fill="none" stroke="#a08ab0" stroke-width="1.9" stroke-linejoin="round" stroke-linecap="round" /><path d="M870.0 226.8 L879.3 235.1 L892.0 239.8 L901.5 250.9 L918.0 260.0 L931.0 265.7 L940.4 275.0 L944.0 289.8" fill="none" stroke="#a08ab0" stroke-width="1.9" stroke-linejoin="round" stroke-linecap="round" /><path d="M925.5 265.7 L925.5 291.6" fill="none" stroke="#a08ab0" stroke-width="1.9" stroke-linejoin="round" stroke-linecap="round" /><path d="M894.0 273.0 L900.0 280.0 L905.0 286.5" fill="none" stroke="#a08ab0" stroke-width="1.9" stroke-linejoin="round" stroke-linecap="round" /><path d="M853.0 212.0 L855.0 236.0 L853.3 285.0 L850.5 305.0 L855.0 323.5 L866.0 347.6 L873.6 366.0 L884.0 385.0 L896.0 405.0 L907.0 426.5 L918.0 437.6 L931.0 439.4 L944.0 445.0 L957.0 448.7 L962.6 456.0 L958.5 461.0 L975.0 464.0 L998.5 465.0" fill="none" stroke="#a08ab0" stroke-width="1.9" stroke-linejoin="round" stroke-linecap="round" /><path d="M846.0 352.0 L856.0 346.0 L868.0 344.0 L885.0 342.0 L905.0 338.0 L925.0 332.0 L940.0 327.0 L947.8 325.4 L966.3 326.3 L988.5 328.0 L998.5 327.0" fill="none" stroke="#a08ab0" stroke-width="1.9" stroke-linejoin="round" stroke-linecap="round" /><path d="M947.8 325.4 L942.0 340.0 L940.0 349.4 L942.0 357.0 L940.4 380.0 L937.0 400.0 L934.8 414.4 L929.0 439.4 L929.0 469.0" fill="none" stroke="#a08ab0" stroke-width="1.9" stroke-linejoin="round" stroke-linecap="round" /><path d="M940.0 344.8 L962.6 343.9 L981.0 340.0 L998.5 336.5" fill="none" stroke="#a08ab0" stroke-width="1.9" stroke-linejoin="round" stroke-linecap="round" /><path d="M988.5 329.0 L979.0 342.0 L970.0 358.7 L960.7 379.0 L959.0 395.0 L959.0 413.5 L966.3 430.0 L966.3 448.7 L962.6 456.0" fill="none" stroke="#a08ab0" stroke-width="1.9" stroke-linejoin="round" stroke-linecap="round" /><path d="M942.0 351.0 L951.5 366.0 L959.0 382.8 L973.7 397.6 L981.0 404.0 L990.0 414.0 L998.5 420.0" fill="none" stroke="#a08ab0" stroke-width="1.9" stroke-linejoin="round" stroke-linecap="round" /><path d="M870.0 389.0 L888.5 391.0 L907.0 391.5 L925.5 392.0 L947.8 395.7 L960.0 397.0" fill="none" stroke="#a08ab0" stroke-width="1.9" stroke-linejoin="round" stroke-linecap="round" /><path d="M907.0 338.0 L908.0 360.0 L907.0 395.0 L907.0 430.0 L906.0 460.0" fill="none" stroke="#a08ab0" stroke-width="1.9" stroke-linejoin="round" stroke-linecap="round" /><path d="M880.0 416.3 L900.0 416.8 L916.0 416.3 L934.8 414.4 L959.0 414.4 L981.0 415.4 L990.0 421.0 L998.5 424.6" fill="none" stroke="#a08ab0" stroke-width="1.9" stroke-linejoin="round" stroke-linecap="round" /><path d="M929.0 432.0 L944.0 440.0 L958.0 447.0" fill="none" stroke="#a08ab0" stroke-width="1.52" stroke-linejoin="round" stroke-linecap="round" /><path d="M956.3 287.2 H961.5 V290.6 Q961.5 292.8 958.9 293.2 Q956.3 292.8 956.3 290.6 Z" fill="#4f6fb0" stroke="#fff" stroke-width="0.5"/><rect x="956.3" y="287.2" width="5.2" height="1.8" fill="#cf3f4f"/><path d="M945.1999999999999 322.79999999999995 H950.4 V326.2 Q950.4 328.4 947.8 328.79999999999995 Q945.1999999999999 328.4 945.1999999999999 326.2 Z" fill="#4f6fb0" stroke="#fff" stroke-width="0.5"/><rect x="945.1999999999999" y="322.79999999999995" width="5.2" height="1.8" fill="#cf3f4f"/><path d="M935.9 346.79999999999995 H941.1 V350.2 Q941.1 352.4 938.5 352.79999999999995 Q935.9 352.4 935.9 350.2 Z" fill="#4f6fb0" stroke="#fff" stroke-width="0.5"/><rect x="935.9" y="346.79999999999995" width="5.2" height="1.8" fill="#cf3f4f"/><path d="M957.4 379.4 H962.6 V382.8 Q962.6 385 960 385.4 Q957.4 385 957.4 382.8 Z" fill="#4f6fb0" stroke="#fff" stroke-width="0.5"/><rect x="957.4" y="379.4" width="5.2" height="1.8" fill="#cf3f4f"/><path d="M941.9 393.4 H947.1 V396.8 Q947.1 399 944.5 399.4 Q941.9 399 941.9 396.8 Z" fill="#4f6fb0" stroke="#fff" stroke-width="0.5"/><rect x="941.9" y="393.4" width="5.2" height="1.8" fill="#cf3f4f"/><path d="M962.4 429.4 H967.6 V432.8 Q967.6 435 965 435.4 Q962.4 435 962.4 432.8 Z" fill="#4f6fb0" stroke="#fff" stroke-width="0.5"/><rect x="962.4" y="429.4" width="5.2" height="1.8" fill="#cf3f4f"/><path d="M924.4 327.4 H929.6 V330.8 Q929.6 333 927 333.4 Q924.4 333 924.4 330.8 Z" fill="#4f6fb0" stroke="#fff" stroke-width="0.5"/><rect x="924.4" y="327.4" width="5.2" height="1.8" fill="#cf3f4f"/><rect x="760.3" y="228.2" width="6.4" height="4.6" rx="1.2" fill="#f4f4f4" stroke="#8a8a8a" stroke-width="0.5"/><rect x="746.8" y="240.7" width="6.4" height="4.6" rx="1.2" fill="#f4f4f4" stroke="#8a8a8a" stroke-width="0.5"/><rect x="763.8" y="290.2" width="6.4" height="4.6" rx="1.2" fill="#f4f4f4" stroke="#8a8a8a" stroke-width="0.5"/><rect x="964.3" y="337.7" width="6.4" height="4.6" rx="1.2" fill="#f4f4f4" stroke="#8a8a8a" stroke-width="0.5"/><rect x="913.8" y="414.2" width="6.4" height="4.6" rx="1.2" fill="#f4f4f4" stroke="#8a8a8a" stroke-width="0.5"/><rect x="920.3" y="449.7" width="6.4" height="4.6" rx="1.2" fill="#f4f4f4" stroke="#8a8a8a" stroke-width="0.5"/><rect x="939.8" y="301.7" width="6.4" height="4.6" rx="1.2" fill="#f4f4f4" stroke="#8a8a8a" stroke-width="0.5"/></g></svg>
<span class="t" style="left:769.00px;top:227px;font-size:8.3px;color:#4a4a4a;transform:scaleX(0.804);transform-origin:0 0;text-shadow:0 0 1px #eee;">Simi Valley</span>
<span class="t" style="left:888.00px;top:266px;font-size:8.3px;color:#4a4a4a;transform:scaleX(0.840);transform-origin:0 0;text-shadow:0 0 1px #eee;">Burbank</span>
<span class="t" style="left:904.50px;top:281px;font-size:8.3px;color:#4a4a4a;transform:scaleX(0.798);transform-origin:0 0;text-shadow:0 0 1px #eee;">Glendale</span>
<span class="t" style="left:898.00px;top:333px;font-size:9.1px;color:#4a4a4a;transform:scaleX(0.847);transform-origin:0 0;text-shadow:0 0 1px #eee;">Los Angeles</span>
<span class="t" style="left:830.00px;top:350px;font-size:8.3px;color:#4a4a4a;transform:scaleX(0.709);transform-origin:0 0;text-shadow:0 0 1px #eee;">Santa Monica</span>
<span class="t" style="left:966.00px;top:323px;font-size:8.3px;color:#4a4a4a;transform:scaleX(0.824);transform-origin:0 0;text-shadow:0 0 1px #eee;">El Monte</span>
<span class="t" style="left:957.00px;top:347px;font-size:7.9px;color:#4a4a4a;transform:scaleX(0.802);transform-origin:0 0;text-shadow:0 0 1px #eee;">Montebello</span>
<span class="t" style="left:968.00px;top:368px;font-size:7.9px;color:#4a4a4a;transform:scaleX(0.859);transform-origin:0 0;text-shadow:0 0 1px #eee;">Whittier</span>
<span class="t" style="left:903.00px;top:358px;font-size:7.9px;color:#4a4a4a;transform:scaleX(0.803);transform-origin:0 0;text-shadow:0 0 1px #eee;">Huntington Park</span>
<span class="t" style="left:915.50px;top:370px;font-size:7.9px;color:#4a4a4a;transform:scaleX(0.726);transform-origin:0 0;text-shadow:0 0 1px #eee;">South Gate</span>
<span class="t" style="left:926.00px;top:382px;font-size:8.3px;color:#4a4a4a;transform:scaleX(0.834);transform-origin:0 0;text-shadow:0 0 1px #eee;">Downey</span>
<span class="t" style="left:956.00px;top:393px;font-size:8.3px;color:#4a4a4a;transform:scaleX(0.867);transform-origin:0 0;text-shadow:0 0 1px #eee;">Norwalk</span>
<span class="t" style="left:870.00px;top:372px;font-size:8.3px;color:#4a4a4a;transform:scaleX(0.925);transform-origin:0 0;text-shadow:0 0 1px #eee;">Inglewood</span>
<span class="t" style="left:873.00px;top:394px;font-size:7.9px;color:#4a4a4a;transform:scaleX(0.785);transform-origin:0 0;text-shadow:0 0 1px #eee;">Hawthorne</span>
<span class="t" style="left:912.50px;top:403px;font-size:7.9px;color:#4a4a4a;transform:scaleX(0.795);transform-origin:0 0;text-shadow:0 0 1px #eee;">Compton</span>
<span class="t" style="left:876.00px;top:409px;font-size:7.5px;color:#4a4a4a;transform:scaleX(0.771);transform-origin:0 0;text-shadow:0 0 1px #eee;">Gardena</span>
<span class="t" style="left:856.50px;top:419px;font-size:7.5px;color:#4a4a4a;transform:scaleX(0.809);transform-origin:0 0;text-shadow:0 0 1px #eee;">Redondo Beach</span>
<span class="t" style="left:878.00px;top:430px;font-size:8.3px;color:#4a4a4a;transform:scaleX(0.836);transform-origin:0 0;text-shadow:0 0 1px #eee;">Torrance</span>
<span class="t" style="left:921.50px;top:425px;font-size:7.9px;color:#4a4a4a;transform:scaleX(0.764);transform-origin:0 0;text-shadow:0 0 1px #eee;">Lakewood</span>
<span class="t" style="left:957.00px;top:418px;font-size:7.9px;color:#4a4a4a;transform:scaleX(0.726);transform-origin:0 0;text-shadow:0 0 1px #eee;">Buena Park</span>
<span class="t" style="left:901.00px;top:441px;font-size:7.9px;color:#4a4a4a;transform:scaleX(0.746);transform-origin:0 0;text-shadow:0 0 1px #eee;">Carson</span>
<span class="t" style="left:895.50px;top:460px;font-size:9.1px;color:#4a4a4a;transform:scaleX(0.813);transform-origin:0 0;text-shadow:0 0 1px #eee;">Long Beach</span>
<span class="t" style="left:962.00px;top:456px;font-size:8.3px;color:#4a4a4a;transform:scaleX(0.780);transform-origin:0 0;text-shadow:0 0 1px #eee;">Garden Grove</span>
<span class="t" style="left:959.00px;top:468px;font-size:7.9px;color:#4a4a4a;transform:scaleX(0.777);transform-origin:0 0;text-shadow:0 0 1px #eee;">Westminster</span>
<span class="t" style="left:855.50px;top:468px;font-size:7.5px;color:#4a4a4a;transform:scaleX(0.782);transform-origin:0 0;text-shadow:0 0 1px #eee;">Rancho Palos</span>
<span class="t" style="left:866.00px;top:477px;font-size:7.5px;color:#4a4a4a;transform:scaleX(0.750);transform-origin:0 0;text-shadow:0 0 1px #eee;">Verdes</span>
<span class="t" style="left:984.00px;top:488px;font-size:7.1px;color:#4a4a4a;transform:scaleX(0.796);transform-origin:0 0;text-shadow:0 0 1px #eee;">Fountain</span>
<span class="t" style="left:923.00px;top:313px;font-size:7.9px;color:#4a4a4a;transform:scaleX(0.813);transform-origin:0 0;text-shadow:0 0 1px #eee;">Alhambra</span>
<span class="t" style="left:868.00px;top:340px;font-size:7.5px;color:#4a4a4a;transform:scaleX(0.763);transform-origin:0 0;text-shadow:0 0 1px #eee;">Culver City</span>
<span class="t" style="left:992.00px;top:310px;font-size:8.3px;color:#4a4a4a;transform:scaleX(0.746);transform-origin:0 0;text-shadow:0 0 1px #eee;">West</span>
<span class="t" style="left:778.50px;top:350px;font-size:5.6px;color:#5564a8;font-style:italic;transform:scaleX(0.973);transform-origin:0 0;">Santa Monica Bay</span>
<span class="t" style="left:768.50px;top:249px;font-size:5.2px;color:#7a7a7a;transform:scaleX(0.920);transform-origin:0 0;">Santa</span>
<span class="t" style="left:765.50px;top:256px;font-size:5.2px;color:#7a7a7a;transform:scaleX(0.924);transform-origin:0 0;">Monica</span>
<span class="t" style="left:762.00px;top:263px;font-size:5.2px;color:#7a7a7a;transform:scaleX(0.917);transform-origin:0 0;">Mountains</span>
<span class="t" style="left:767.00px;top:269px;font-size:5.2px;color:#7a7a7a;transform:scaleX(0.718);transform-origin:0 0;">N.R.A.</span>
<span class="t" style="left:809.50px;top:304px;font-size:5.2px;color:#6a6a6a;transform:scaleX(0.827);transform-origin:0 0;">Topanga</span>
<span class="t" style="left:809.50px;top:310px;font-size:5.2px;color:#6a6a6a;transform:scaleX(0.838);transform-origin:0 0;">Lookout</span>
<span class="t" style="left:843.00px;top:287px;font-size:5.2px;color:#8a7a7a;transform:scaleX(0.751);transform-origin:0 0;">San Vicente</span>
<span class="t" style="left:846.00px;top:294px;font-size:5.2px;color:#8a7a7a;transform:scaleX(0.795);transform-origin:0 0;">Mountain</span>
<span class="t" style="left:973.50px;top:244px;font-size:5.4px;color:#6a6a6a;transform:scaleX(0.810);transform-origin:0 0;">Mount Wilson</span>
<span class="t" style="left:973.50px;top:250px;font-size:5.2px;color:#6a6a6a;transform:scaleX(0.721);transform-origin:0 0;">1741 m</span>
<span class="t" style="left:905.00px;top:293px;font-size:5.0px;color:#8a8080;transform:scaleX(0.887);transform-origin:0 0;">Mount Hollywood</span>
<span class="t" style="left:745.30px;top:229px;font-size:8.2px;color:#4a4a4a;letter-spacing:-2.103px;">ark</span>
<svg style="position:absolute;left:0;top:0" width="1024" height="540" viewBox="0 0 1024 540"><g clip-path="url(#mc)"><g opacity="0.8"><g filter="url(#hb)"><path d="M815.0 237.0 L849.0 235.5 L852.0 216.0 L860.0 213.0 L872.0 214.0 L872.0 231.0 L880.0 258.0 L887.0 282.0 L893.0 302.0 L885.0 303.0 L874.0 291.0 L850.0 285.0 L815.0 283.0 Z" fill="#f08e95" opacity="0.78"/><ellipse cx="820" cy="262" rx="4" ry="16" fill="#e8666e" opacity="0.35"/><ellipse cx="832" cy="258" rx="4" ry="16" fill="#e8666e" opacity="0.35"/><ellipse cx="845" cy="262" rx="4" ry="16" fill="#e8666e" opacity="0.3"/><ellipse cx="858" cy="262" rx="6" ry="20" fill="#e8666e" opacity="0.5"/><ellipse cx="872" cy="268" rx="5" ry="18" fill="#e8666e" opacity="0.4"/><ellipse cx="838" cy="279" rx="12" ry="3" fill="#e8666e" opacity="0.4"/><ellipse cx="809" cy="272" rx="6" ry="6" fill="#f08e95" opacity="0.45"/><ellipse cx="905.3" cy="244" rx="5.5" ry="3.5" fill="#f08e95" opacity="0.7"/><ellipse cx="897" cy="240" rx="4" ry="2.5" fill="#f08e95" opacity="0.5"/><path d="M885.0 302.0 L905.0 296.0 L940.0 298.0 L945.0 316.0 L942.0 352.0 L926.0 362.0 L924.0 390.0 L913.0 394.0 L909.5 455.0 L900.0 455.0 L899.0 392.0 L893.0 374.0 L882.0 390.0 L867.0 387.0 L868.0 372.0 L851.0 368.0 L848.0 353.0 L852.0 330.0 L876.0 323.0 L881.0 308.0 Z" fill="#f08e95" opacity="0.8"/><ellipse cx="857" cy="336.5" rx="8" ry="7" fill="#ee8088" opacity="0.75"/><ellipse cx="854" cy="362" rx="6" ry="7" fill="#ee8088" opacity="0.8"/><ellipse cx="872" cy="345" rx="8" ry="8" fill="#ee8088" opacity="0.6"/><ellipse cx="874" cy="381" rx="7" ry="8" fill="#ee8088" opacity="0.75"/><ellipse cx="829" cy="339" rx="3" ry="2" fill="#f08e95" opacity="0.5"/><ellipse cx="912.6" cy="458" rx="9" ry="7" fill="#ee8088" opacity="0.75"/><ellipse cx="906" cy="478" rx="5" ry="11" fill="#ee8088" opacity="0.8"/><ellipse cx="905" cy="326" rx="21" ry="19" fill="#e35a63" opacity="0.7"/><ellipse cx="911" cy="346" rx="12" ry="12" fill="#e35a63" opacity="0.5"/><ellipse cx="880" cy="340" rx="10" ry="8" fill="#e8666e" opacity="0.35"/><ellipse cx="910" cy="368" rx="8.5" ry="22" fill="#e35a63" opacity="0.7"/><ellipse cx="916" cy="385" rx="7" ry="5" fill="#ee8088" opacity="0.6"/></g><g filter="url(#hb2)"><ellipse cx="817.2" cy="272" rx="3.2" ry="4.5" fill="#d4343f" opacity="0.8"/><ellipse cx="857" cy="254.8" rx="4.2" ry="6" fill="#d4343f" opacity="0.7"/><ellipse cx="859" cy="272" rx="3.5" ry="5.5" fill="#d4343f" opacity="0.6"/><ellipse cx="836.5" cy="267.7" rx="3" ry="6" fill="#d4343f" opacity="0.35"/><ellipse cx="828" cy="252.7" rx="2.5" ry="5" fill="#d4343f" opacity="0.35"/><ellipse cx="881.7" cy="282.8" rx="2.8" ry="5" fill="#aa0c16" opacity="0.8"/><ellipse cx="872" cy="262" rx="3" ry="8" fill="#d4343f" opacity="0.35"/><ellipse cx="845" cy="262" rx="3" ry="9" fill="#d4343f" opacity="0.25"/><ellipse cx="860" cy="220.4" rx="3" ry="3" fill="#d4343f" opacity="0.3"/><ellipse cx="836" cy="281" rx="5" ry="2.5" fill="#d4343f" opacity="0.4"/><ellipse cx="895" cy="313.5" rx="8.5" ry="5.5" fill="#aa0c16" opacity="0.85"/><ellipse cx="910" cy="331" rx="13" ry="12" fill="#aa0c16" opacity="0.85"/><ellipse cx="915" cy="338" rx="8" ry="8" fill="#a30d18" opacity="0.8"/><ellipse cx="902" cy="322" rx="8" ry="8" fill="#d4343f" opacity="0.7"/><ellipse cx="909" cy="368" rx="3.6" ry="18" fill="#aa0c16" opacity="0.8"/><ellipse cx="906" cy="350" rx="8" ry="10" fill="#d4343f" opacity="0.6"/><ellipse cx="886" cy="332" rx="6" ry="5" fill="#d4343f" opacity="0.45"/><ellipse cx="889" cy="349" rx="4" ry="4" fill="#d4343f" opacity="0.5"/><ellipse cx="896" cy="362" rx="4" ry="5" fill="#d4343f" opacity="0.45"/><ellipse cx="913" cy="385" rx="5" ry="5" fill="#d4343f" opacity="0.5"/><ellipse cx="856" cy="337" rx="3" ry="3" fill="#d4343f" opacity="0.5"/><ellipse cx="852.5" cy="362.5" rx="2.5" ry="2.5" fill="#d4343f" opacity="0.5"/><ellipse cx="873" cy="384" rx="2.5" ry="3" fill="#d4343f" opacity="0.6"/><ellipse cx="913" cy="458" rx="3.5" ry="3" fill="#d4343f" opacity="0.6"/><ellipse cx="906" cy="479" rx="2" ry="5.5" fill="#c9202c" opacity="0.8"/><ellipse cx="928" cy="318" rx="9" ry="8" fill="#d4343f" opacity="0.3"/><ellipse cx="925" cy="306" rx="8" ry="4" fill="#d4343f" opacity="0.3"/></g></g><rect x="769" y="416.3" width="84.3" height="61" fill="#f6f6f6" stroke="#e4e4e4" stroke-width="0.6"/><rect x="772.1" y="438.5" width="78.4" height="8" fill="url(#lg)" stroke="#e9a8a0" stroke-width="0.5"/></g></svg>
<span class="t" style="left:772.30px;top:427px;font-size:7.2px;color:#333;transform:scaleX(0.805);transform-origin:0 0;">Crime_no (Count - Not Blank)</span>
<span class="t" style="left:772.30px;top:451px;font-size:6.2px;color:#333;transform:scaleX(0.804);transform-origin:0 0;">1.69</span>
<span class="t" style="left:831.60px;top:451px;font-size:6.2px;color:#333;transform:scaleX(0.783);transform-origin:0 0;">3,839.61</span>
<span class="t" style="left:772.30px;top:460px;font-size:6.2px;color:#333;transform:scaleX(0.772);transform-origin:0 0;">or Less</span>
<span class="t" style="left:832.10px;top:460px;font-size:6.2px;color:#333;transform:scaleX(0.861);transform-origin:0 0;">or More</span>
<div style="position:absolute;left:998.5px;top:214.0px;width:25.5px;height:279.2px;background:#fff"></div>
<div style="position:absolute;left:0;top:516px;width:1024px;height:24px;background:#1d1b19"></div>
<div style="position:absolute;left:317.3px;top:515px;width:62px;height:21.3px;background:#fff;border-radius:0 0 4px 4px"></div>
<div style="position:absolute;left:323.2px;top:533px;width:50px;height:1.5px;background:#1e8e57"></div>
<svg style="position:absolute;left:0;top:0" width="1024" height="540" viewBox="0 0 1024 540"><path d="M10.2 523.8 L6.4 527.4 L10.2 531" fill="none" stroke="#b4b4b4" stroke-width="1.1"/><path d="M29.8 523.8 L33.6 527.4 L29.8 531" fill="none" stroke="#b4b4b4" stroke-width="1.1"/><rect x="240.5" y="521" width="1" height="13" fill="#555"/><rect x="314.1" y="521" width="1" height="13" fill="#555"/><rect x="381.3" y="521" width="1" height="13" fill="#555"/><path d="M412.2 527.2 H420.2 M416.2 523.2 V531.2" stroke="#e8e8e8" stroke-width="1.1"/><rect x="651.6" y="524.6999999999999" width="1.3" height="1.3" fill="#d0d0d0"/><rect x="651.6" y="527.5" width="1.3" height="1.3" fill="#d0d0d0"/><rect x="651.6" y="530.3" width="1.3" height="1.3" fill="#d0d0d0"/><path d="M671.6 525.2 V531 L667.2 528.1 Z" fill="#d0d0d0"/><path d="M679 528.1 H1024" stroke="#3c3c3c" stroke-width="1" stroke-dasharray="1 2"/><rect x="730.4" y="524.9" width="254.7" height="6.2" rx="3.1" fill="#9d9d9d"/></svg>
<span class="t" style="left:76.50px;top:524px;font-size:10.4px;color:#f0f0f0;transform:scaleX(0.919);transform-origin:0 0;">Crime_Data_from_2020_to_Present</span>
<span class="t" style="left:251.00px;top:524px;font-size:10.4px;color:#f0f0f0;transform:scaleX(0.957);transform-origin:0 0;">Pivot Tables</span>
<span class="t" style="left:323.50px;top:522px;font-size:10.4px;color:#222;font-weight:700;transform:scaleX(0.897);transform-origin:0 0;">Dashboard</span>
</div></body></html>
